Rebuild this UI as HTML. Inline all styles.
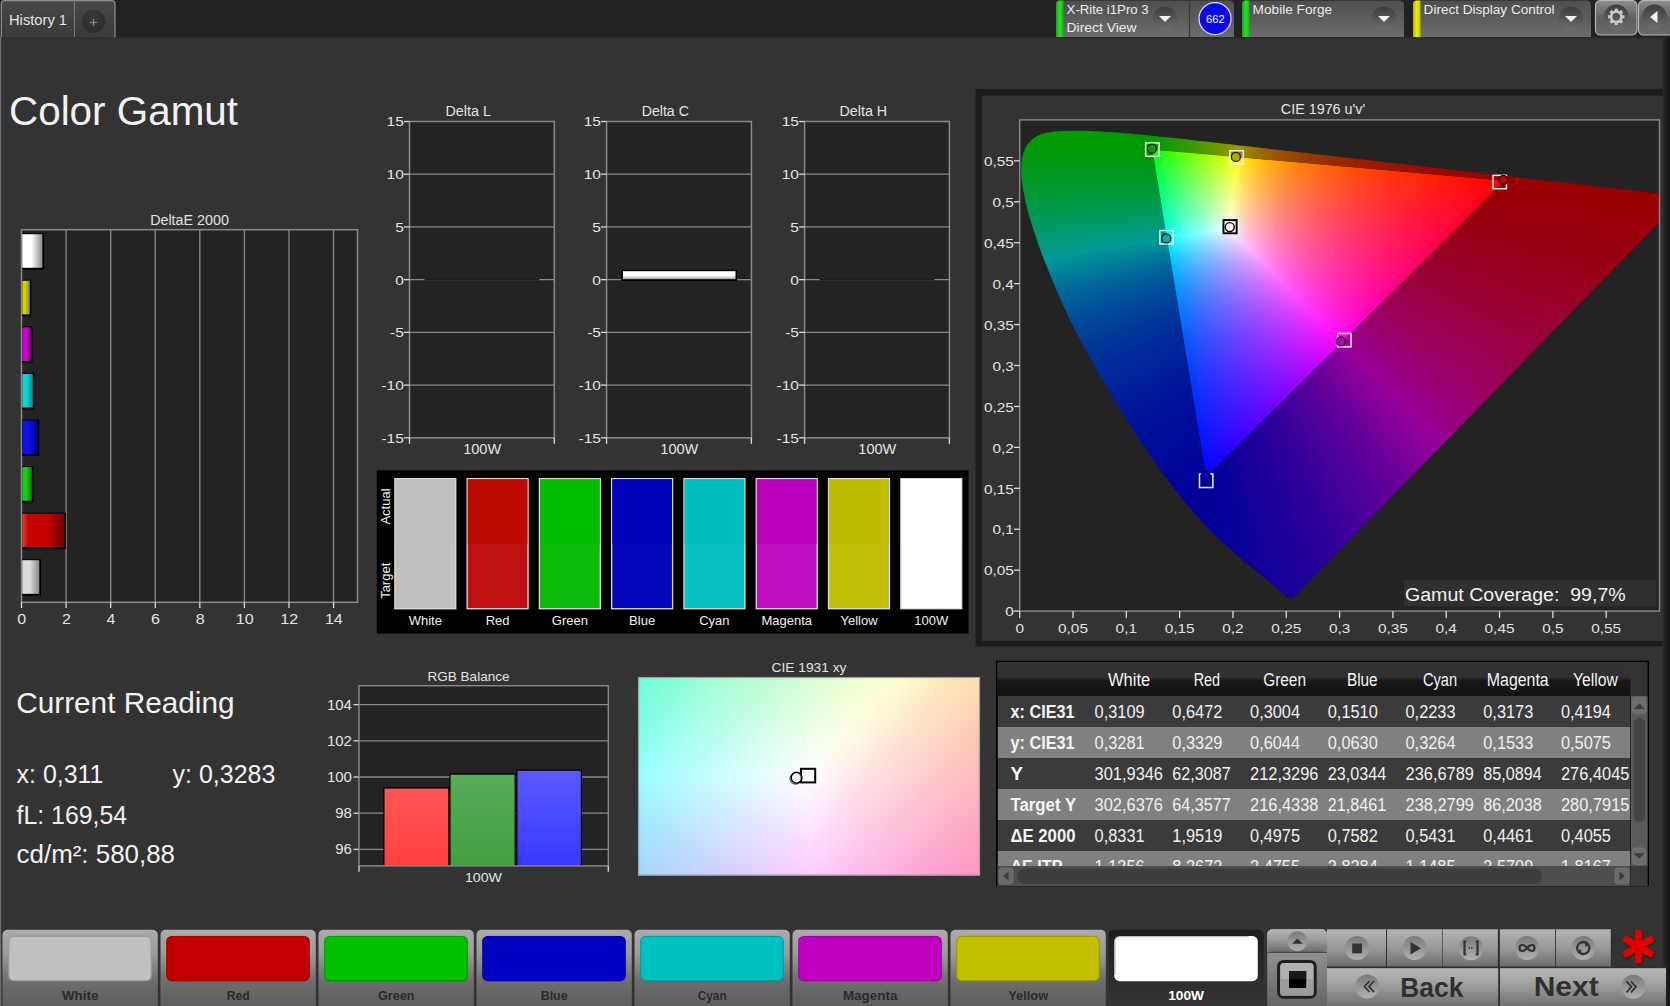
<!DOCTYPE html>
<html><head><meta charset="utf-8"><title>Color Gamut</title>
<style>
html,body{margin:0;padding:0;background:#333;overflow:hidden;position:relative;width:1670px;height:1006px}
.cie{position:absolute;left:0;top:0;width:1670px;height:1006px;isolation:isolate}.cie .cp{position:absolute;left:0;top:0;width:1670px;height:1006px}.cie .cl{position:absolute;left:0;top:0;width:1670px;height:1006px;mix-blend-mode:screen}
svg{display:block;font-family:"Liberation Sans",sans-serif;}
</style></head><body>
<svg width="1670" height="1006" viewBox="0 0 1670 1006">
<defs>
<linearGradient id="redge" x1="0" x2="1" y1="0" y2="0"><stop offset="0" stop-color="#2e2e2e"/><stop offset="1" stop-color="#121212"/></linearGradient>
<linearGradient id="tabg" x1="0" x2="0" y1="0" y2="1"><stop offset="0" stop-color="#484848"/><stop offset="1" stop-color="#3a3a3a"/></linearGradient>
<radialGradient id="plusg" cx="0.5" cy="0.35" r="0.6"><stop offset="0" stop-color="#3a3a3a"/><stop offset="1" stop-color="#2c2c2c"/></radialGradient>
<linearGradient id="devg" x1="0" x2="0" y1="0" y2="1"><stop offset="0" stop-color="#4e4e4e"/><stop offset="1" stop-color="#6c6c6c"/></linearGradient>
<linearGradient id="ddg" x1="0" x2="0" y1="0" y2="1"><stop offset="0" stop-color="#3c3c3c"/><stop offset="1" stop-color="#6e6e6e"/></linearGradient>
<linearGradient id="greenbar" x1="0" x2="1" y1="0" y2="0"><stop offset="0" stop-color="#1ca01c"/><stop offset="0.5" stop-color="#22e622"/><stop offset="1" stop-color="#18b018"/></linearGradient>
<linearGradient id="yelbar" x1="0" x2="1" y1="0" y2="0"><stop offset="0" stop-color="#b0b000"/><stop offset="0.5" stop-color="#f0f000"/><stop offset="1" stop-color="#c0c000"/></linearGradient>
<linearGradient id="btng" x1="0" x2="0" y1="0" y2="1"><stop offset="0" stop-color="#8e8e8e"/><stop offset="0.55" stop-color="#5e5e5e"/><stop offset="1" stop-color="#6a6a6a"/></linearGradient>
<linearGradient id="deb0" x1="0" x2="1"><stop offset="0" stop-color="#ffffff"/><stop offset="0.45" stop-color="#ffffff"/><stop offset="1" stop-color="#8c8c8c"/></linearGradient>
<linearGradient id="deb1" x1="0" x2="1"><stop offset="0" stop-color="#d0d000"/><stop offset="0.45" stop-color="#d0d000"/><stop offset="1" stop-color="#8a8a00"/></linearGradient>
<linearGradient id="deb2" x1="0" x2="1"><stop offset="0" stop-color="#d000d0"/><stop offset="0.45" stop-color="#d000d0"/><stop offset="1" stop-color="#800080"/></linearGradient>
<linearGradient id="deb3" x1="0" x2="1"><stop offset="0" stop-color="#10d0d0"/><stop offset="0.45" stop-color="#10d0d0"/><stop offset="1" stop-color="#008888"/></linearGradient>
<linearGradient id="deb4" x1="0" x2="1"><stop offset="0" stop-color="#1010e0"/><stop offset="0.45" stop-color="#1010e0"/><stop offset="1" stop-color="#000080"/></linearGradient>
<linearGradient id="deb5" x1="0" x2="1"><stop offset="0" stop-color="#10d010"/><stop offset="0.45" stop-color="#10d010"/><stop offset="1" stop-color="#008000"/></linearGradient>
<linearGradient id="deb6" x1="0" x2="1"><stop offset="0" stop-color="#e04040"/><stop offset="0.15" stop-color="#c80000"/><stop offset="0.6" stop-color="#c00000"/><stop offset="1" stop-color="#700000"/></linearGradient>
<linearGradient id="deb7" x1="0" x2="1"><stop offset="0" stop-color="#dcdcdc"/><stop offset="0.45" stop-color="#dcdcdc"/><stop offset="1" stop-color="#888888"/></linearGradient>
<linearGradient id="dcb" x1="0" x2="0" y1="0" y2="1"><stop offset="0" stop-color="#ffffff"/><stop offset="0.55" stop-color="#ffffff"/><stop offset="1" stop-color="#a0a0a0"/></linearGradient>
<linearGradient id="rbr" x1="0" x2="0" y1="0" y2="1"><stop offset="0" stop-color="#ff5656"/><stop offset="1" stop-color="#ff4040"/></linearGradient>
<linearGradient id="rbg" x1="0" x2="0" y1="0" y2="1"><stop offset="0" stop-color="#58ac58"/><stop offset="1" stop-color="#40a040"/></linearGradient>
<linearGradient id="rbb" x1="0" x2="0" y1="0" y2="1"><stop offset="0" stop-color="#5a5aff"/><stop offset="1" stop-color="#3838ff"/></linearGradient>
<style>#c9 rect{width:10.5px;height:10.5px}</style>
<filter id="c9blur" x="-5%" y="-5%" width="110%" height="110%" color-interpolation-filters="sRGB"><feGaussianBlur stdDeviation="6.0"/></filter>
<clipPath id="c9clip"><rect x="638" y="677" width="342" height="198.6"/></clipPath>
<linearGradient id="thg" x1="0" x2="0" y1="0" y2="1"><stop offset="0" stop-color="#343434"/><stop offset="0.45" stop-color="#303030"/><stop offset="0.55" stop-color="#171717"/><stop offset="1" stop-color="#131313"/></linearGradient>
<linearGradient id="bbg" x1="0" x2="0" y1="0" y2="1"><stop offset="0" stop-color="#ababab"/><stop offset="0.3" stop-color="#9a9a9a"/><stop offset="0.62" stop-color="#6e6e6e"/><stop offset="1" stop-color="#5a5a5a"/></linearGradient>
<linearGradient id="bbsel" x1="0" x2="0" y1="0" y2="1"><stop offset="0" stop-color="#1c1c1c"/><stop offset="0.5" stop-color="#2a2a2a"/><stop offset="1" stop-color="#363636"/></linearGradient>
<linearGradient id="cbg" x1="0" x2="0" y1="0" y2="1"><stop offset="0" stop-color="#b4b4b4"/><stop offset="0.5" stop-color="#999"/><stop offset="1" stop-color="#6c6c6c"/></linearGradient>
<linearGradient id="cbg2" x1="0" x2="0" y1="0" y2="1"><stop offset="0" stop-color="#b8b8b8"/><stop offset="0.4" stop-color="#a0a0a0"/><stop offset="1" stop-color="#6a6a6a"/></linearGradient>
<linearGradient id="icg" x1="0" x2="0" y1="0" y2="1"><stop offset="0" stop-color="#7a7a7a"/><stop offset="1" stop-color="#b0b0b0"/></linearGradient>
<linearGradient id="lbg" x1="0" x2="0" y1="0" y2="1"><stop offset="0" stop-color="#a8a8a8"/><stop offset="0.3" stop-color="#8e8e8e"/><stop offset="1" stop-color="#5e5e5e"/></linearGradient>
<filter id="astsh" x="-30%" y="-30%" width="160%" height="160%"><feDropShadow dx="0.8" dy="1" stdDeviation="0.8" flood-color="#000" flood-opacity="0.5"/></filter>
</defs>
<rect x="0" y="0" width="1670" height="1006" fill="#333333" />
<rect x="0" y="0" width="1670" height="37" fill="#222222" />
<rect x="0" y="37" width="1670" height="1.5" fill="#2a2a2a" />
<rect x="0" y="37" width="1.2" height="969" fill="#6e6e6e" />
<rect x="1662" y="37" width="8" height="969" fill="url(#redge)" />
<path d="M1.3,37.5 V4 Q1.3,0.7 4.5,0.7 H111.5 Q115,0.7 115,4 V37.5" fill="url(#tabg)" stroke="#8f8f8f" stroke-width="1.2"/>
<line x1="74.5" y1="2" x2="74.5" y2="37" stroke="#7a7a7a" stroke-width="1" />
<text x="9" y="25" font-size="14" fill="#e4e4e4" textLength="58" lengthAdjust="spacingAndGlyphs">History 1</text>
<circle cx="93.5" cy="21.5" r="11.5" fill="url(#plusg)"/>
<path d="M90,22.5 H97 M93.5,19 V26" stroke="#8a8a8a" stroke-width="1.2"/>
<path d="M1056,37 V4 Q1056,0.5 1060,0.5 H1229 Q1234,0.5 1234,5 V37 Z" fill="url(#devg)"/>
<path d="M1056,37 V4 Q1056,0.5 1060,0.5 H1063.5 V37 Z" fill="url(#greenbar)"/>
<text x="1066.6" y="13.8" font-size="12" fill="#ececec" textLength="82" lengthAdjust="spacingAndGlyphs">X-Rite i1Pro 3</text>
<text x="1066.6" y="32.3" font-size="12" fill="#ececec" textLength="70" lengthAdjust="spacingAndGlyphs">Direct View</text>
<circle cx="1165" cy="18.5" r="12" fill="url(#ddg)"/>
<path d="M1159,16 H1171 L1165,22 Z" fill="#f4f4f4"/>
<line x1="1189.5" y1="2" x2="1189.5" y2="37" stroke="#3a3a3a" stroke-width="1.2" />
<circle cx="1215" cy="18.6" r="16" fill="#0a0ae6" stroke="#d8d8ff" stroke-width="1.3"/>
<text x="1215.3" y="22.8" font-size="11" fill="#ffffff" text-anchor="middle" textLength="18.6" lengthAdjust="spacingAndGlyphs">662</text>
<path d="M1242,37 V4 Q1242,0.5 1246,0.5 H1399 Q1404,0.5 1404,5 V37 Z" fill="url(#devg)"/>
<path d="M1242,37 V4 Q1242,0.5 1246,0.5 H1249.5 V37 Z" fill="url(#greenbar)"/>
<text x="1252.6" y="13.8" font-size="12" fill="#ececec" textLength="79.6" lengthAdjust="spacingAndGlyphs">Mobile Forge</text>
<circle cx="1384" cy="18.5" r="12" fill="url(#ddg)"/>
<path d="M1378,16 H1390 L1384,22 Z" fill="#f4f4f4"/>
<path d="M1413,37 V4 Q1413,0.5 1417,0.5 H1586 Q1591,0.5 1591,5 V37 Z" fill="url(#devg)"/>
<path d="M1413,37 V4 Q1413,0.5 1417,0.5 H1420.5 V37 Z" fill="url(#yelbar)"/>
<text x="1423.6" y="13.7" font-size="12" fill="#ececec" textLength="131" lengthAdjust="spacingAndGlyphs">Direct Display Control</text>
<circle cx="1571" cy="18.5" r="12" fill="url(#ddg)"/>
<path d="M1565,16 H1577 L1571,22 Z" fill="#f4f4f4"/>
<rect x="1595.5" y="0.5" width="41.5" height="34.5" rx="5" fill="url(#btng)" stroke="#b8b8b8" stroke-width="1.1"/>
<rect x="1638.5" y="0.5" width="40" height="34.5" rx="5" fill="url(#btng)" stroke="#b8b8b8" stroke-width="1.1"/>
<circle cx="1616.3" cy="17" r="12.5" fill="url(#ddg)"/>
<circle cx="1654.5" cy="17" r="12.5" fill="url(#ddg)"/>
<rect x="1614.7" y="8.6" width="3.2" height="4" fill="#c8c8c8" transform="rotate(0 1616.3 16.8)"/><rect x="1614.7" y="8.6" width="3.2" height="4" fill="#c8c8c8" transform="rotate(45 1616.3 16.8)"/><rect x="1614.7" y="8.6" width="3.2" height="4" fill="#c8c8c8" transform="rotate(90 1616.3 16.8)"/><rect x="1614.7" y="8.6" width="3.2" height="4" fill="#c8c8c8" transform="rotate(135 1616.3 16.8)"/><rect x="1614.7" y="8.6" width="3.2" height="4" fill="#c8c8c8" transform="rotate(180 1616.3 16.8)"/><rect x="1614.7" y="8.6" width="3.2" height="4" fill="#c8c8c8" transform="rotate(225 1616.3 16.8)"/><rect x="1614.7" y="8.6" width="3.2" height="4" fill="#c8c8c8" transform="rotate(270 1616.3 16.8)"/><rect x="1614.7" y="8.6" width="3.2" height="4" fill="#c8c8c8" transform="rotate(315 1616.3 16.8)"/>
<circle cx="1616.3" cy="16.8" r="5.2" fill="none" stroke="#c8c8c8" stroke-width="2.6"/>
<path d="M1650,17 L1657.5,11 V23 Z" fill="#f0f0f0"/>
<text x="9" y="125" font-size="40" fill="#f2f2f2" textLength="229" lengthAdjust="spacingAndGlyphs">Color Gamut</text>
<text x="189.5" y="225.1" font-size="14" fill="#e4e4e4" text-anchor="middle" textLength="78.7" lengthAdjust="spacingAndGlyphs">DeltaE 2000</text>
<rect x="21.5" y="229.7" width="336" height="372.6" fill="#232323" />
<line x1="66.08" y1="229.7" x2="66.08" y2="602.3" stroke="#8a8a8a" stroke-width="1.3" />
<line x1="110.66" y1="229.7" x2="110.66" y2="602.3" stroke="#8a8a8a" stroke-width="1.3" />
<line x1="155.24" y1="229.7" x2="155.24" y2="602.3" stroke="#8a8a8a" stroke-width="1.3" />
<line x1="199.82" y1="229.7" x2="199.82" y2="602.3" stroke="#8a8a8a" stroke-width="1.3" />
<line x1="244.4" y1="229.7" x2="244.4" y2="602.3" stroke="#8a8a8a" stroke-width="1.3" />
<line x1="288.98" y1="229.7" x2="288.98" y2="602.3" stroke="#8a8a8a" stroke-width="1.3" />
<line x1="333.56" y1="229.7" x2="333.56" y2="602.3" stroke="#8a8a8a" stroke-width="1.3" />
<rect x="21.5" y="229.7" width="336" height="372.6" fill="none" stroke="#8a8a8a" stroke-width="1.5"/>
<line x1="21.5" y1="602.3" x2="21.5" y2="608" stroke="#dcdcdc" stroke-width="1.3" />
<text x="21.8" y="624.3" font-size="14" fill="#e4e4e4" text-anchor="middle" textLength="8.95" lengthAdjust="spacingAndGlyphs">0</text>
<line x1="66.08" y1="602.3" x2="66.08" y2="608" stroke="#dcdcdc" stroke-width="1.3" />
<text x="66.38" y="624.3" font-size="14" fill="#e4e4e4" text-anchor="middle" textLength="8.95" lengthAdjust="spacingAndGlyphs">2</text>
<line x1="110.66" y1="602.3" x2="110.66" y2="608" stroke="#dcdcdc" stroke-width="1.3" />
<text x="110.96" y="624.3" font-size="14" fill="#e4e4e4" text-anchor="middle" textLength="8.95" lengthAdjust="spacingAndGlyphs">4</text>
<line x1="155.24" y1="602.3" x2="155.24" y2="608" stroke="#dcdcdc" stroke-width="1.3" />
<text x="155.54" y="624.3" font-size="14" fill="#e4e4e4" text-anchor="middle" textLength="8.95" lengthAdjust="spacingAndGlyphs">6</text>
<line x1="199.82" y1="602.3" x2="199.82" y2="608" stroke="#dcdcdc" stroke-width="1.3" />
<text x="200.12" y="624.3" font-size="14" fill="#e4e4e4" text-anchor="middle" textLength="8.95" lengthAdjust="spacingAndGlyphs">8</text>
<line x1="244.4" y1="602.3" x2="244.4" y2="608" stroke="#dcdcdc" stroke-width="1.3" />
<text x="244.7" y="624.3" font-size="14" fill="#e4e4e4" text-anchor="middle" textLength="17.91" lengthAdjust="spacingAndGlyphs">10</text>
<line x1="288.98" y1="602.3" x2="288.98" y2="608" stroke="#dcdcdc" stroke-width="1.3" />
<text x="289.28" y="624.3" font-size="14" fill="#e4e4e4" text-anchor="middle" textLength="17.91" lengthAdjust="spacingAndGlyphs">12</text>
<line x1="333.56" y1="602.3" x2="333.56" y2="608" stroke="#dcdcdc" stroke-width="1.3" />
<text x="333.86" y="624.3" font-size="14" fill="#e4e4e4" text-anchor="middle" textLength="17.91" lengthAdjust="spacingAndGlyphs">14</text>
<rect x="22.25" y="233.19" width="21.82" height="36.6" fill="#000000" />
<rect x="22.25" y="234.19" width="20.12" height="33.6" fill="url(#deb0)" />
<rect x="22.25" y="279.76" width="9.24" height="36.6" fill="#000000" />
<rect x="22.25" y="280.76" width="7.54" height="33.6" fill="url(#deb1)" />
<rect x="22.25" y="326.34" width="10.14" height="36.6" fill="#000000" />
<rect x="22.25" y="327.34" width="8.44" height="33.6" fill="url(#deb2)" />
<rect x="22.25" y="372.91" width="12.31" height="36.6" fill="#000000" />
<rect x="22.25" y="373.91" width="10.61" height="33.6" fill="url(#deb3)" />
<rect x="22.25" y="419.49" width="17.1" height="36.6" fill="#000000" />
<rect x="22.25" y="420.49" width="15.4" height="33.6" fill="url(#deb4)" />
<rect x="22.25" y="466.06" width="11.29" height="36.6" fill="#000000" />
<rect x="22.25" y="467.06" width="9.59" height="33.6" fill="url(#deb5)" />
<rect x="22.25" y="512.64" width="43.71" height="36.6" fill="#000000" />
<rect x="22.25" y="513.64" width="42.01" height="33.6" fill="url(#deb6)" />
<rect x="22.25" y="559.21" width="18.77" height="36.6" fill="#000000" />
<rect x="22.25" y="560.21" width="17.07" height="33.6" fill="url(#deb7)" />
<rect x="409.5" y="121.5" width="144.8" height="316.3" fill="#232323" />
<text x="468.2" y="116.3" font-size="14" fill="#e4e4e4" text-anchor="middle" textLength="45.3" lengthAdjust="spacingAndGlyphs">Delta L</text>
<line x1="409.5" y1="174.22" x2="554.3" y2="174.22" stroke="#8a8a8a" stroke-width="1.3" />
<line x1="409.5" y1="226.93" x2="554.3" y2="226.93" stroke="#8a8a8a" stroke-width="1.3" />
<line x1="409.5" y1="279.65" x2="554.3" y2="279.65" stroke="#8a8a8a" stroke-width="1.3" />
<line x1="409.5" y1="332.37" x2="554.3" y2="332.37" stroke="#8a8a8a" stroke-width="1.3" />
<line x1="409.5" y1="385.08" x2="554.3" y2="385.08" stroke="#8a8a8a" stroke-width="1.3" />
<rect x="409.5" y="121.5" width="144.8" height="316.3" fill="none" stroke="#8a8a8a" stroke-width="1.5"/>
<line x1="404" y1="121.5" x2="409.5" y2="121.5" stroke="#dcdcdc" stroke-width="1.3" />
<text x="403.9" y="126.4" font-size="13.5" fill="#e4e4e4" text-anchor="end" textLength="17.27" lengthAdjust="spacingAndGlyphs">15</text>
<line x1="404" y1="174.22" x2="409.5" y2="174.22" stroke="#dcdcdc" stroke-width="1.3" />
<text x="403.9" y="179.12" font-size="13.5" fill="#e4e4e4" text-anchor="end" textLength="17.27" lengthAdjust="spacingAndGlyphs">10</text>
<line x1="404" y1="226.93" x2="409.5" y2="226.93" stroke="#dcdcdc" stroke-width="1.3" />
<text x="403.9" y="231.83" font-size="13.5" fill="#e4e4e4" text-anchor="end" textLength="8.63" lengthAdjust="spacingAndGlyphs">5</text>
<line x1="404" y1="279.65" x2="409.5" y2="279.65" stroke="#dcdcdc" stroke-width="1.3" />
<text x="403.9" y="284.55" font-size="13.5" fill="#e4e4e4" text-anchor="end" textLength="8.63" lengthAdjust="spacingAndGlyphs">0</text>
<line x1="404" y1="332.37" x2="409.5" y2="332.37" stroke="#dcdcdc" stroke-width="1.3" />
<text x="403.9" y="337.27" font-size="13.5" fill="#e4e4e4" text-anchor="end" textLength="13.8" lengthAdjust="spacingAndGlyphs">-5</text>
<line x1="404" y1="385.08" x2="409.5" y2="385.08" stroke="#dcdcdc" stroke-width="1.3" />
<text x="403.9" y="389.98" font-size="13.5" fill="#e4e4e4" text-anchor="end" textLength="22.44" lengthAdjust="spacingAndGlyphs">-10</text>
<line x1="404" y1="437.8" x2="409.5" y2="437.8" stroke="#dcdcdc" stroke-width="1.3" />
<text x="403.9" y="442.7" font-size="13.5" fill="#e4e4e4" text-anchor="end" textLength="22.44" lengthAdjust="spacingAndGlyphs">-15</text>
<line x1="409.5" y1="437.8" x2="409.5" y2="443.8" stroke="#dcdcdc" stroke-width="1.3" />
<line x1="554.3" y1="437.8" x2="554.3" y2="443.8" stroke="#dcdcdc" stroke-width="1.3" />
<text x="482.2" y="453.5" font-size="14" fill="#e4e4e4" text-anchor="middle" textLength="38" lengthAdjust="spacingAndGlyphs">100W</text>
<rect x="424.5" y="278.45" width="114.8" height="2" fill="#1e1e1e" />
<rect x="606.6" y="121.5" width="144.8" height="316.3" fill="#232323" />
<text x="665.3" y="116.3" font-size="14" fill="#e4e4e4" text-anchor="middle" textLength="47.2" lengthAdjust="spacingAndGlyphs">Delta C</text>
<line x1="606.6" y1="174.22" x2="751.4" y2="174.22" stroke="#8a8a8a" stroke-width="1.3" />
<line x1="606.6" y1="226.93" x2="751.4" y2="226.93" stroke="#8a8a8a" stroke-width="1.3" />
<line x1="606.6" y1="279.65" x2="751.4" y2="279.65" stroke="#8a8a8a" stroke-width="1.3" />
<line x1="606.6" y1="332.37" x2="751.4" y2="332.37" stroke="#8a8a8a" stroke-width="1.3" />
<line x1="606.6" y1="385.08" x2="751.4" y2="385.08" stroke="#8a8a8a" stroke-width="1.3" />
<rect x="606.6" y="121.5" width="144.8" height="316.3" fill="none" stroke="#8a8a8a" stroke-width="1.5"/>
<line x1="601.1" y1="121.5" x2="606.6" y2="121.5" stroke="#dcdcdc" stroke-width="1.3" />
<text x="601" y="126.4" font-size="13.5" fill="#e4e4e4" text-anchor="end" textLength="17.27" lengthAdjust="spacingAndGlyphs">15</text>
<line x1="601.1" y1="174.22" x2="606.6" y2="174.22" stroke="#dcdcdc" stroke-width="1.3" />
<text x="601" y="179.12" font-size="13.5" fill="#e4e4e4" text-anchor="end" textLength="17.27" lengthAdjust="spacingAndGlyphs">10</text>
<line x1="601.1" y1="226.93" x2="606.6" y2="226.93" stroke="#dcdcdc" stroke-width="1.3" />
<text x="601" y="231.83" font-size="13.5" fill="#e4e4e4" text-anchor="end" textLength="8.63" lengthAdjust="spacingAndGlyphs">5</text>
<line x1="601.1" y1="279.65" x2="606.6" y2="279.65" stroke="#dcdcdc" stroke-width="1.3" />
<text x="601" y="284.55" font-size="13.5" fill="#e4e4e4" text-anchor="end" textLength="8.63" lengthAdjust="spacingAndGlyphs">0</text>
<line x1="601.1" y1="332.37" x2="606.6" y2="332.37" stroke="#dcdcdc" stroke-width="1.3" />
<text x="601" y="337.27" font-size="13.5" fill="#e4e4e4" text-anchor="end" textLength="13.8" lengthAdjust="spacingAndGlyphs">-5</text>
<line x1="601.1" y1="385.08" x2="606.6" y2="385.08" stroke="#dcdcdc" stroke-width="1.3" />
<text x="601" y="389.98" font-size="13.5" fill="#e4e4e4" text-anchor="end" textLength="22.44" lengthAdjust="spacingAndGlyphs">-10</text>
<line x1="601.1" y1="437.8" x2="606.6" y2="437.8" stroke="#dcdcdc" stroke-width="1.3" />
<text x="601" y="442.7" font-size="13.5" fill="#e4e4e4" text-anchor="end" textLength="22.44" lengthAdjust="spacingAndGlyphs">-15</text>
<line x1="606.6" y1="437.8" x2="606.6" y2="443.8" stroke="#dcdcdc" stroke-width="1.3" />
<line x1="751.4" y1="437.8" x2="751.4" y2="443.8" stroke="#dcdcdc" stroke-width="1.3" />
<text x="679.3" y="453.5" font-size="14" fill="#e4e4e4" text-anchor="middle" textLength="38" lengthAdjust="spacingAndGlyphs">100W</text>
<rect x="804.6" y="121.5" width="144.8" height="316.3" fill="#232323" />
<text x="863.3" y="116.3" font-size="14" fill="#e4e4e4" text-anchor="middle" textLength="47.6" lengthAdjust="spacingAndGlyphs">Delta H</text>
<line x1="804.6" y1="174.22" x2="949.4" y2="174.22" stroke="#8a8a8a" stroke-width="1.3" />
<line x1="804.6" y1="226.93" x2="949.4" y2="226.93" stroke="#8a8a8a" stroke-width="1.3" />
<line x1="804.6" y1="279.65" x2="949.4" y2="279.65" stroke="#8a8a8a" stroke-width="1.3" />
<line x1="804.6" y1="332.37" x2="949.4" y2="332.37" stroke="#8a8a8a" stroke-width="1.3" />
<line x1="804.6" y1="385.08" x2="949.4" y2="385.08" stroke="#8a8a8a" stroke-width="1.3" />
<rect x="804.6" y="121.5" width="144.8" height="316.3" fill="none" stroke="#8a8a8a" stroke-width="1.5"/>
<line x1="799.1" y1="121.5" x2="804.6" y2="121.5" stroke="#dcdcdc" stroke-width="1.3" />
<text x="799" y="126.4" font-size="13.5" fill="#e4e4e4" text-anchor="end" textLength="17.27" lengthAdjust="spacingAndGlyphs">15</text>
<line x1="799.1" y1="174.22" x2="804.6" y2="174.22" stroke="#dcdcdc" stroke-width="1.3" />
<text x="799" y="179.12" font-size="13.5" fill="#e4e4e4" text-anchor="end" textLength="17.27" lengthAdjust="spacingAndGlyphs">10</text>
<line x1="799.1" y1="226.93" x2="804.6" y2="226.93" stroke="#dcdcdc" stroke-width="1.3" />
<text x="799" y="231.83" font-size="13.5" fill="#e4e4e4" text-anchor="end" textLength="8.63" lengthAdjust="spacingAndGlyphs">5</text>
<line x1="799.1" y1="279.65" x2="804.6" y2="279.65" stroke="#dcdcdc" stroke-width="1.3" />
<text x="799" y="284.55" font-size="13.5" fill="#e4e4e4" text-anchor="end" textLength="8.63" lengthAdjust="spacingAndGlyphs">0</text>
<line x1="799.1" y1="332.37" x2="804.6" y2="332.37" stroke="#dcdcdc" stroke-width="1.3" />
<text x="799" y="337.27" font-size="13.5" fill="#e4e4e4" text-anchor="end" textLength="13.8" lengthAdjust="spacingAndGlyphs">-5</text>
<line x1="799.1" y1="385.08" x2="804.6" y2="385.08" stroke="#dcdcdc" stroke-width="1.3" />
<text x="799" y="389.98" font-size="13.5" fill="#e4e4e4" text-anchor="end" textLength="22.44" lengthAdjust="spacingAndGlyphs">-10</text>
<line x1="799.1" y1="437.8" x2="804.6" y2="437.8" stroke="#dcdcdc" stroke-width="1.3" />
<text x="799" y="442.7" font-size="13.5" fill="#e4e4e4" text-anchor="end" textLength="22.44" lengthAdjust="spacingAndGlyphs">-15</text>
<line x1="804.6" y1="437.8" x2="804.6" y2="443.8" stroke="#dcdcdc" stroke-width="1.3" />
<line x1="949.4" y1="437.8" x2="949.4" y2="443.8" stroke="#dcdcdc" stroke-width="1.3" />
<text x="877.3" y="453.5" font-size="14" fill="#e4e4e4" text-anchor="middle" textLength="38" lengthAdjust="spacingAndGlyphs">100W</text>
<rect x="819.6" y="278.45" width="114.8" height="2" fill="#1e1e1e" />
<rect x="621" y="269.8" width="116" height="11.2" fill="#000" />
<rect x="623" y="271.2" width="112.5" height="8" fill="url(#dcb)" />
<rect x="376.8" y="470.4" width="591.7" height="163.1" fill="#000000" />
<rect x="394.2" y="478" width="62.2" height="131.4" fill="#dcdcdc" />
<rect x="395.5" y="479.3" width="59.6" height="128.8" fill="#c0c0c0" />
<rect x="395.5" y="479.3" width="59.6" height="65" fill="#c0c0c0" />
<text x="425.3" y="624.6" font-size="13" fill="#f0f0f0" text-anchor="middle">White</text>
<rect x="466.48" y="478" width="62.2" height="131.4" fill="#dcdcdc" />
<rect x="467.78" y="479.3" width="59.6" height="128.8" fill="#be1010" />
<rect x="467.78" y="479.3" width="59.6" height="65" fill="#bb0b00" />
<text x="497.58" y="624.6" font-size="13" fill="#f0f0f0" text-anchor="middle">Red</text>
<rect x="538.76" y="478" width="62.2" height="131.4" fill="#dcdcdc" />
<rect x="540.06" y="479.3" width="59.6" height="128.8" fill="#0cbe0c" />
<rect x="540.06" y="479.3" width="59.6" height="65" fill="#00bb00" />
<text x="569.86" y="624.6" font-size="13" fill="#f0f0f0" text-anchor="middle">Green</text>
<rect x="611.04" y="478" width="62.2" height="131.4" fill="#dcdcdc" />
<rect x="612.34" y="479.3" width="59.6" height="128.8" fill="#0606bd" />
<rect x="612.34" y="479.3" width="59.6" height="65" fill="#0000bb" />
<text x="642.14" y="624.6" font-size="13" fill="#f0f0f0" text-anchor="middle">Blue</text>
<rect x="683.32" y="478" width="62.2" height="131.4" fill="#dcdcdc" />
<rect x="684.62" y="479.3" width="59.6" height="128.8" fill="#0abfc0" />
<rect x="684.62" y="479.3" width="59.6" height="65" fill="#00bebe" />
<text x="714.42" y="624.6" font-size="13" fill="#f0f0f0" text-anchor="middle">Cyan</text>
<rect x="755.6" y="478" width="62.2" height="131.4" fill="#dcdcdc" />
<rect x="756.9" y="479.3" width="59.6" height="128.8" fill="#bd0cbd" />
<rect x="756.9" y="479.3" width="59.6" height="65" fill="#bc00bc" />
<text x="786.7" y="624.6" font-size="13" fill="#f0f0f0" text-anchor="middle">Magenta</text>
<rect x="827.88" y="478" width="62.2" height="131.4" fill="#dcdcdc" />
<rect x="829.18" y="479.3" width="59.6" height="128.8" fill="#bfbf0a" />
<rect x="829.18" y="479.3" width="59.6" height="65" fill="#bebe00" />
<text x="858.98" y="624.6" font-size="13" fill="#f0f0f0" text-anchor="middle">Yellow</text>
<rect x="900.16" y="478" width="62.2" height="131.4" fill="#dcdcdc" />
<rect x="901.46" y="479.3" width="59.6" height="128.8" fill="#ffffff" />
<rect x="901.46" y="479.3" width="59.6" height="65" fill="#ffffff" />
<text x="931.26" y="624.6" font-size="13" fill="#f0f0f0" text-anchor="middle">100W</text>
<text x="0" y="0" font-size="13" fill="#f0f0f0" text-anchor="middle" transform="translate(390,506.5) rotate(-90)">Actual</text>
<text x="0" y="0" font-size="13" fill="#f0f0f0" text-anchor="middle" transform="translate(390,580.8) rotate(-90)">Target</text>
<rect x="975.5" y="89" width="687.5" height="557.5" fill="#1c1c1c" />
<rect x="982" y="95.6" width="681" height="545.4" fill="#333333" />
<text x="1323" y="114.2" font-size="14" fill="#e4e4e4" text-anchor="middle" textLength="84.3" lengthAdjust="spacingAndGlyphs">CIE 1976 u'v'</text>
<rect x="1019.7" y="119.9" width="639.8" height="491.2" fill="#232323" />
<text x="16.2" y="713" font-size="29.5" fill="#f2f2f2" textLength="218.4" lengthAdjust="spacingAndGlyphs">Current Reading</text>
<text x="16.6" y="782.9" font-size="25" fill="#f2f2f2" textLength="86.8" lengthAdjust="spacingAndGlyphs">x: 0,311</text>
<text x="172.6" y="782.9" font-size="25" fill="#f2f2f2" textLength="102.7" lengthAdjust="spacingAndGlyphs">y: 0,3283</text>
<text x="16.6" y="823.6" font-size="25" fill="#f2f2f2" textLength="110.4" lengthAdjust="spacingAndGlyphs">fL: 169,54</text>
<text x="16.6" y="863.4" font-size="25" fill="#f2f2f2" textLength="158.4" lengthAdjust="spacingAndGlyphs">cd/m²: 580,88</text>
<text x="468.5" y="680.9" font-size="13.5" fill="#e4e4e4" text-anchor="middle" textLength="82" lengthAdjust="spacingAndGlyphs">RGB Balance</text>
<rect x="359" y="685.7" width="249.3" height="180.2" fill="#232323" />
<line x1="359" y1="704.6" x2="608.3" y2="704.6" stroke="#8a8a8a" stroke-width="1.3" />
<line x1="353.5" y1="704.6" x2="359" y2="704.6" stroke="#dcdcdc" stroke-width="1.3" />
<text x="351.9" y="709.5" font-size="14" fill="#e4e4e4" text-anchor="end" textLength="24.99" lengthAdjust="spacingAndGlyphs">104</text>
<line x1="359" y1="740.8" x2="608.3" y2="740.8" stroke="#8a8a8a" stroke-width="1.3" />
<line x1="353.5" y1="740.8" x2="359" y2="740.8" stroke="#dcdcdc" stroke-width="1.3" />
<text x="351.9" y="745.7" font-size="14" fill="#e4e4e4" text-anchor="end" textLength="24.99" lengthAdjust="spacingAndGlyphs">102</text>
<line x1="359" y1="777" x2="608.3" y2="777" stroke="#8a8a8a" stroke-width="1.3" />
<line x1="353.5" y1="777" x2="359" y2="777" stroke="#dcdcdc" stroke-width="1.3" />
<text x="351.9" y="781.9" font-size="14" fill="#e4e4e4" text-anchor="end" textLength="24.99" lengthAdjust="spacingAndGlyphs">100</text>
<line x1="359" y1="813.2" x2="608.3" y2="813.2" stroke="#8a8a8a" stroke-width="1.3" />
<line x1="353.5" y1="813.2" x2="359" y2="813.2" stroke="#dcdcdc" stroke-width="1.3" />
<text x="351.9" y="818.1" font-size="14" fill="#e4e4e4" text-anchor="end" textLength="16.66" lengthAdjust="spacingAndGlyphs">98</text>
<line x1="359" y1="849.4" x2="608.3" y2="849.4" stroke="#8a8a8a" stroke-width="1.3" />
<line x1="353.5" y1="849.4" x2="359" y2="849.4" stroke="#dcdcdc" stroke-width="1.3" />
<text x="351.9" y="854.3" font-size="14" fill="#e4e4e4" text-anchor="end" textLength="16.66" lengthAdjust="spacingAndGlyphs">96</text>
<rect x="383.3" y="787.3" width="66.1" height="78.6" fill="#000000" />
<rect x="384.5" y="788.6" width="63.7" height="77.3" fill="url(#rbr)" />
<rect x="449.4" y="773.4" width="66.4" height="92.5" fill="#000000" />
<rect x="450.6" y="774.7" width="64" height="91.2" fill="url(#rbg)" />
<rect x="516.3" y="769.5" width="65.7" height="96.4" fill="#000000" />
<rect x="517.5" y="770.8" width="63.3" height="95.1" fill="url(#rbb)" />
<rect x="359" y="685.7" width="249.3" height="180.2" fill="none" stroke="#8a8a8a" stroke-width="1.4"/>
<line x1="359" y1="865.9" x2="359" y2="871.8" stroke="#dcdcdc" stroke-width="1.3" />
<line x1="608.3" y1="865.9" x2="608.3" y2="871.8" stroke="#dcdcdc" stroke-width="1.3" />
<text x="483.5" y="882.2" font-size="13.5" fill="#e4e4e4" text-anchor="middle" textLength="37" lengthAdjust="spacingAndGlyphs">100W</text>
<text x="809" y="672" font-size="13.5" fill="#e4e4e4" text-anchor="middle" textLength="75" lengthAdjust="spacingAndGlyphs">CIE 1931 xy</text>
<g clip-path="url(#c9clip)"><g id="c9" filter="url(#c9blur)"><rect x="628" y="667" fill="#60ffd5"/><rect x="638" y="667" fill="#6affd5"/><rect x="648" y="667" fill="#73ffd5"/><rect x="658" y="667" fill="#7cffd4"/><rect x="668" y="667" fill="#83ffd4"/><rect x="678" y="667" fill="#8bffd4"/><rect x="688" y="667" fill="#91ffd3"/><rect x="698" y="667" fill="#98ffd3"/><rect x="708" y="667" fill="#9effd3"/><rect x="718" y="667" fill="#a5ffd2"/><rect x="728" y="667" fill="#abffd2"/><rect x="738" y="667" fill="#b0ffd1"/><rect x="748" y="667" fill="#b6ffd1"/><rect x="758" y="667" fill="#bbffd1"/><rect x="768" y="667" fill="#c1ffd0"/><rect x="778" y="667" fill="#c6ffd0"/><rect x="788" y="667" fill="#cbffcf"/><rect x="798" y="667" fill="#d0ffcf"/><rect x="808" y="667" fill="#d5ffcf"/><rect x="818" y="667" fill="#daffce"/><rect x="828" y="667" fill="#dfffce"/><rect x="838" y="667" fill="#e4ffcd"/><rect x="848" y="667" fill="#e8ffcd"/><rect x="858" y="667" fill="#edffcc"/><rect x="868" y="667" fill="#f2ffcc"/><rect x="878" y="667" fill="#f6ffcb"/><rect x="888" y="667" fill="#fbffcb"/><rect x="898" y="667" fill="#ffffca"/><rect x="908" y="667" fill="#fffac6"/><rect x="918" y="667" fill="#fff6c2"/><rect x="928" y="667" fill="#fff2be"/><rect x="938" y="667" fill="#ffeeba"/><rect x="948" y="667" fill="#ffeab7"/><rect x="958" y="667" fill="#ffe6b3"/><rect x="968" y="667" fill="#ffe3b0"/><rect x="978" y="667" fill="#ffdfad"/><rect x="988" y="667" fill="#ffdca9"/><rect x="628" y="677" fill="#66ffd9"/><rect x="638" y="677" fill="#6fffd9"/><rect x="648" y="677" fill="#78ffd8"/><rect x="658" y="677" fill="#80ffd8"/><rect x="668" y="677" fill="#87ffd8"/><rect x="678" y="677" fill="#8fffd7"/><rect x="688" y="677" fill="#95ffd7"/><rect x="698" y="677" fill="#9cffd7"/><rect x="708" y="677" fill="#a2ffd6"/><rect x="718" y="677" fill="#a8ffd6"/><rect x="728" y="677" fill="#aeffd6"/><rect x="738" y="677" fill="#b4ffd5"/><rect x="748" y="677" fill="#baffd5"/><rect x="758" y="677" fill="#bfffd5"/><rect x="768" y="677" fill="#c5ffd4"/><rect x="778" y="677" fill="#caffd4"/><rect x="788" y="677" fill="#cfffd4"/><rect x="798" y="677" fill="#d4ffd3"/><rect x="808" y="677" fill="#d9ffd3"/><rect x="818" y="677" fill="#deffd2"/><rect x="828" y="677" fill="#e3ffd2"/><rect x="838" y="677" fill="#e8ffd2"/><rect x="848" y="677" fill="#ecffd1"/><rect x="858" y="677" fill="#f1ffd1"/><rect x="868" y="677" fill="#f6ffd0"/><rect x="878" y="677" fill="#faffd0"/><rect x="888" y="677" fill="#ffffcf"/><rect x="898" y="677" fill="#fffacb"/><rect x="908" y="677" fill="#fff6c7"/><rect x="918" y="677" fill="#fff2c3"/><rect x="928" y="677" fill="#ffeebf"/><rect x="938" y="677" fill="#ffeabc"/><rect x="948" y="677" fill="#ffe6b8"/><rect x="958" y="677" fill="#ffe3b5"/><rect x="968" y="677" fill="#ffdfb1"/><rect x="978" y="677" fill="#ffdcae"/><rect x="988" y="677" fill="#ffd8ab"/><rect x="628" y="687" fill="#6affdd"/><rect x="638" y="687" fill="#74ffdc"/><rect x="648" y="687" fill="#7cffdc"/><rect x="658" y="687" fill="#84ffdc"/><rect x="668" y="687" fill="#8bffdc"/><rect x="678" y="687" fill="#93ffdb"/><rect x="688" y="687" fill="#99ffdb"/><rect x="698" y="687" fill="#a0ffdb"/><rect x="708" y="687" fill="#a6ffda"/><rect x="718" y="687" fill="#acffda"/><rect x="728" y="687" fill="#b2ffda"/><rect x="738" y="687" fill="#b8ffd9"/><rect x="748" y="687" fill="#bdffd9"/><rect x="758" y="687" fill="#c3ffd9"/><rect x="768" y="687" fill="#c8ffd8"/><rect x="778" y="687" fill="#ceffd8"/><rect x="788" y="687" fill="#d3ffd8"/><rect x="798" y="687" fill="#d8ffd7"/><rect x="808" y="687" fill="#ddffd7"/><rect x="818" y="687" fill="#e2ffd7"/><rect x="828" y="687" fill="#e7ffd6"/><rect x="838" y="687" fill="#ecffd6"/><rect x="848" y="687" fill="#f0ffd6"/><rect x="858" y="687" fill="#f5ffd5"/><rect x="868" y="687" fill="#faffd5"/><rect x="878" y="687" fill="#ffffd4"/><rect x="888" y="687" fill="#fffbd0"/><rect x="898" y="687" fill="#fff6cc"/><rect x="908" y="687" fill="#fff2c8"/><rect x="918" y="687" fill="#ffeec4"/><rect x="928" y="687" fill="#ffeac1"/><rect x="938" y="687" fill="#ffe6bd"/><rect x="948" y="687" fill="#ffe3ba"/><rect x="958" y="687" fill="#ffdfb6"/><rect x="968" y="687" fill="#ffdcb3"/><rect x="978" y="687" fill="#ffd8b0"/><rect x="988" y="687" fill="#ffd5ad"/><rect x="628" y="697" fill="#6fffe0"/><rect x="638" y="697" fill="#78ffe0"/><rect x="648" y="697" fill="#80ffe0"/><rect x="658" y="697" fill="#88ffe0"/><rect x="668" y="697" fill="#90ffdf"/><rect x="678" y="697" fill="#97ffdf"/><rect x="688" y="697" fill="#9dffdf"/><rect x="698" y="697" fill="#a4ffdf"/><rect x="708" y="697" fill="#aaffde"/><rect x="718" y="697" fill="#b0ffde"/><rect x="728" y="697" fill="#b6ffde"/><rect x="738" y="697" fill="#bcffde"/><rect x="748" y="697" fill="#c1ffdd"/><rect x="758" y="697" fill="#c7ffdd"/><rect x="768" y="697" fill="#ccffdd"/><rect x="778" y="697" fill="#d2ffdc"/><rect x="788" y="697" fill="#d7ffdc"/><rect x="798" y="697" fill="#dcffdc"/><rect x="808" y="697" fill="#e1ffdb"/><rect x="818" y="697" fill="#e6ffdb"/><rect x="828" y="697" fill="#ebffdb"/><rect x="838" y="697" fill="#f0ffda"/><rect x="848" y="697" fill="#f5ffda"/><rect x="858" y="697" fill="#f9ffda"/><rect x="868" y="697" fill="#feffd9"/><rect x="878" y="697" fill="#fffbd6"/><rect x="888" y="697" fill="#fff7d1"/><rect x="898" y="697" fill="#fff2cd"/><rect x="908" y="697" fill="#ffeec9"/><rect x="918" y="697" fill="#ffeac6"/><rect x="928" y="697" fill="#ffe6c2"/><rect x="938" y="697" fill="#ffe3be"/><rect x="948" y="697" fill="#ffdfbb"/><rect x="958" y="697" fill="#ffdbb8"/><rect x="968" y="697" fill="#ffd8b4"/><rect x="978" y="697" fill="#ffd5b1"/><rect x="988" y="697" fill="#ffd1ae"/><rect x="628" y="707" fill="#74ffe4"/><rect x="638" y="707" fill="#7dffe4"/><rect x="648" y="707" fill="#85ffe4"/><rect x="658" y="707" fill="#8dffe4"/><rect x="668" y="707" fill="#94ffe3"/><rect x="678" y="707" fill="#9bffe3"/><rect x="688" y="707" fill="#a1ffe3"/><rect x="698" y="707" fill="#a8ffe3"/><rect x="708" y="707" fill="#aeffe3"/><rect x="718" y="707" fill="#b4ffe2"/><rect x="728" y="707" fill="#baffe2"/><rect x="738" y="707" fill="#c0ffe2"/><rect x="748" y="707" fill="#c5ffe2"/><rect x="758" y="707" fill="#cbffe1"/><rect x="768" y="707" fill="#d0ffe1"/><rect x="778" y="707" fill="#d6ffe1"/><rect x="788" y="707" fill="#dbffe1"/><rect x="798" y="707" fill="#e0ffe0"/><rect x="808" y="707" fill="#e5ffe0"/><rect x="818" y="707" fill="#eaffe0"/><rect x="828" y="707" fill="#efffdf"/><rect x="838" y="707" fill="#f4ffdf"/><rect x="848" y="707" fill="#f9ffdf"/><rect x="858" y="707" fill="#feffde"/><rect x="868" y="707" fill="#fffbdb"/><rect x="878" y="707" fill="#fff7d7"/><rect x="888" y="707" fill="#fff3d3"/><rect x="898" y="707" fill="#ffeecf"/><rect x="908" y="707" fill="#ffeacb"/><rect x="918" y="707" fill="#ffe6c7"/><rect x="928" y="707" fill="#ffe2c3"/><rect x="938" y="707" fill="#ffdfc0"/><rect x="948" y="707" fill="#ffdbbc"/><rect x="958" y="707" fill="#ffd8b9"/><rect x="968" y="707" fill="#ffd4b6"/><rect x="978" y="707" fill="#ffd1b3"/><rect x="988" y="707" fill="#ffceb0"/><rect x="628" y="717" fill="#79ffe8"/><rect x="638" y="717" fill="#81ffe8"/><rect x="648" y="717" fill="#89ffe8"/><rect x="658" y="717" fill="#91ffe8"/><rect x="668" y="717" fill="#98ffe8"/><rect x="678" y="717" fill="#9fffe7"/><rect x="688" y="717" fill="#a5ffe7"/><rect x="698" y="717" fill="#acffe7"/><rect x="708" y="717" fill="#b2ffe7"/><rect x="718" y="717" fill="#b8ffe7"/><rect x="728" y="717" fill="#beffe6"/><rect x="738" y="717" fill="#c4ffe6"/><rect x="748" y="717" fill="#c9ffe6"/><rect x="758" y="717" fill="#cfffe6"/><rect x="768" y="717" fill="#d4ffe5"/><rect x="778" y="717" fill="#daffe5"/><rect x="788" y="717" fill="#dfffe5"/><rect x="798" y="717" fill="#e4ffe5"/><rect x="808" y="717" fill="#e9ffe5"/><rect x="818" y="717" fill="#eeffe4"/><rect x="828" y="717" fill="#f3ffe4"/><rect x="838" y="717" fill="#f8ffe4"/><rect x="848" y="717" fill="#fdffe4"/><rect x="858" y="717" fill="#fffce0"/><rect x="868" y="717" fill="#fff7dc"/><rect x="878" y="717" fill="#fff3d8"/><rect x="888" y="717" fill="#ffeed4"/><rect x="898" y="717" fill="#ffead0"/><rect x="908" y="717" fill="#ffe6cc"/><rect x="918" y="717" fill="#ffe2c8"/><rect x="928" y="717" fill="#ffdfc4"/><rect x="938" y="717" fill="#ffdbc1"/><rect x="948" y="717" fill="#ffd7be"/><rect x="958" y="717" fill="#ffd4ba"/><rect x="968" y="717" fill="#ffd1b7"/><rect x="978" y="717" fill="#ffceb4"/><rect x="988" y="717" fill="#ffcab1"/><rect x="628" y="727" fill="#7dffec"/><rect x="638" y="727" fill="#86ffec"/><rect x="648" y="727" fill="#8effec"/><rect x="658" y="727" fill="#95ffec"/><rect x="668" y="727" fill="#9cffec"/><rect x="678" y="727" fill="#a3ffec"/><rect x="688" y="727" fill="#aaffeb"/><rect x="698" y="727" fill="#b0ffeb"/><rect x="708" y="727" fill="#b6ffeb"/><rect x="718" y="727" fill="#bcffeb"/><rect x="728" y="727" fill="#c2ffeb"/><rect x="738" y="727" fill="#c8ffeb"/><rect x="748" y="727" fill="#ceffea"/><rect x="758" y="727" fill="#d3ffea"/><rect x="768" y="727" fill="#d8ffea"/><rect x="778" y="727" fill="#deffea"/><rect x="788" y="727" fill="#e3ffea"/><rect x="798" y="727" fill="#e8ffe9"/><rect x="808" y="727" fill="#eeffe9"/><rect x="818" y="727" fill="#f3ffe9"/><rect x="828" y="727" fill="#f8ffe9"/><rect x="838" y="727" fill="#fdffe9"/><rect x="848" y="727" fill="#fffce6"/><rect x="858" y="727" fill="#fff8e1"/><rect x="868" y="727" fill="#fff3dd"/><rect x="878" y="727" fill="#ffefd9"/><rect x="888" y="727" fill="#ffead5"/><rect x="898" y="727" fill="#ffe6d1"/><rect x="908" y="727" fill="#ffe2cd"/><rect x="918" y="727" fill="#ffdec9"/><rect x="928" y="727" fill="#ffdbc6"/><rect x="938" y="727" fill="#ffd7c2"/><rect x="948" y="727" fill="#ffd4bf"/><rect x="958" y="727" fill="#ffd0bc"/><rect x="968" y="727" fill="#ffcdb8"/><rect x="978" y="727" fill="#ffcab5"/><rect x="988" y="727" fill="#ffc7b2"/><rect x="628" y="737" fill="#82fff0"/><rect x="638" y="737" fill="#8afff0"/><rect x="648" y="737" fill="#92fff0"/><rect x="658" y="737" fill="#99fff0"/><rect x="668" y="737" fill="#a0fff0"/><rect x="678" y="737" fill="#a7fff0"/><rect x="688" y="737" fill="#aefff0"/><rect x="698" y="737" fill="#b4fff0"/><rect x="708" y="737" fill="#baffef"/><rect x="718" y="737" fill="#c0ffef"/><rect x="728" y="737" fill="#c6ffef"/><rect x="738" y="737" fill="#ccffef"/><rect x="748" y="737" fill="#d2ffef"/><rect x="758" y="737" fill="#d7ffef"/><rect x="768" y="737" fill="#ddffef"/><rect x="778" y="737" fill="#e2ffee"/><rect x="788" y="737" fill="#e7ffee"/><rect x="798" y="737" fill="#edffee"/><rect x="808" y="737" fill="#f2ffee"/><rect x="818" y="737" fill="#f7ffee"/><rect x="828" y="737" fill="#fcffee"/><rect x="838" y="737" fill="#fffdeb"/><rect x="848" y="737" fill="#fff8e7"/><rect x="858" y="737" fill="#fff3e2"/><rect x="868" y="737" fill="#ffefde"/><rect x="878" y="737" fill="#ffeada"/><rect x="888" y="737" fill="#ffe6d6"/><rect x="898" y="737" fill="#ffe2d2"/><rect x="908" y="737" fill="#ffdece"/><rect x="918" y="737" fill="#ffdbca"/><rect x="928" y="737" fill="#ffd7c7"/><rect x="938" y="737" fill="#ffd3c3"/><rect x="948" y="737" fill="#ffd0c0"/><rect x="958" y="737" fill="#ffcdbd"/><rect x="968" y="737" fill="#ffcaba"/><rect x="978" y="737" fill="#ffc6b7"/><rect x="988" y="737" fill="#ffc3b4"/><rect x="628" y="747" fill="#87fff5"/><rect x="638" y="747" fill="#8ffff5"/><rect x="648" y="747" fill="#96fff4"/><rect x="658" y="747" fill="#9efff4"/><rect x="668" y="747" fill="#a5fff4"/><rect x="678" y="747" fill="#acfff4"/><rect x="688" y="747" fill="#b2fff4"/><rect x="698" y="747" fill="#b8fff4"/><rect x="708" y="747" fill="#bffff4"/><rect x="718" y="747" fill="#c5fff4"/><rect x="728" y="747" fill="#cbfff4"/><rect x="738" y="747" fill="#d0fff4"/><rect x="748" y="747" fill="#d6fff4"/><rect x="758" y="747" fill="#dcfff3"/><rect x="768" y="747" fill="#e1fff3"/><rect x="778" y="747" fill="#e7fff3"/><rect x="788" y="747" fill="#ecfff3"/><rect x="798" y="747" fill="#f1fff3"/><rect x="808" y="747" fill="#f7fff3"/><rect x="818" y="747" fill="#fcfff3"/><rect x="828" y="747" fill="#fffdf1"/><rect x="838" y="747" fill="#fff8ec"/><rect x="848" y="747" fill="#fff3e7"/><rect x="858" y="747" fill="#ffefe3"/><rect x="868" y="747" fill="#ffeadf"/><rect x="878" y="747" fill="#ffe6db"/><rect x="888" y="747" fill="#ffe2d7"/><rect x="898" y="747" fill="#ffded3"/><rect x="908" y="747" fill="#ffdacf"/><rect x="918" y="747" fill="#ffd7cb"/><rect x="928" y="747" fill="#ffd3c8"/><rect x="938" y="747" fill="#ffd0c4"/><rect x="948" y="747" fill="#ffccc1"/><rect x="958" y="747" fill="#ffc9be"/><rect x="968" y="747" fill="#ffc6bb"/><rect x="978" y="747" fill="#ffc3b8"/><rect x="988" y="747" fill="#ffc0b5"/><rect x="628" y="757" fill="#8bfff9"/><rect x="638" y="757" fill="#93fff9"/><rect x="648" y="757" fill="#9bfff9"/><rect x="658" y="757" fill="#a2fff9"/><rect x="668" y="757" fill="#a9fff9"/><rect x="678" y="757" fill="#b0fff9"/><rect x="688" y="757" fill="#b6fff9"/><rect x="698" y="757" fill="#bdfff9"/><rect x="708" y="757" fill="#c3fff9"/><rect x="718" y="757" fill="#c9fff8"/><rect x="728" y="757" fill="#cffff8"/><rect x="738" y="757" fill="#d5fff8"/><rect x="748" y="757" fill="#dafff8"/><rect x="758" y="757" fill="#e0fff8"/><rect x="768" y="757" fill="#e6fff8"/><rect x="778" y="757" fill="#ebfff8"/><rect x="788" y="757" fill="#f0fff8"/><rect x="798" y="757" fill="#f6fff8"/><rect x="808" y="757" fill="#fbfff8"/><rect x="818" y="757" fill="#fffef7"/><rect x="828" y="757" fill="#fff8f2"/><rect x="838" y="757" fill="#fff4ed"/><rect x="848" y="757" fill="#ffefe8"/><rect x="858" y="757" fill="#ffeae4"/><rect x="868" y="757" fill="#ffe6df"/><rect x="878" y="757" fill="#ffe2db"/><rect x="888" y="757" fill="#ffded7"/><rect x="898" y="757" fill="#ffdad4"/><rect x="908" y="757" fill="#ffd6d0"/><rect x="918" y="757" fill="#ffd3cc"/><rect x="928" y="757" fill="#ffcfc9"/><rect x="938" y="757" fill="#ffccc6"/><rect x="948" y="757" fill="#ffc9c2"/><rect x="958" y="757" fill="#ffc5bf"/><rect x="968" y="757" fill="#ffc2bc"/><rect x="978" y="757" fill="#ffbfb9"/><rect x="988" y="757" fill="#ffbcb6"/><rect x="628" y="767" fill="#90fffd"/><rect x="638" y="767" fill="#98fffd"/><rect x="648" y="767" fill="#9ffffd"/><rect x="658" y="767" fill="#a7fffd"/><rect x="668" y="767" fill="#aefffd"/><rect x="678" y="767" fill="#b4fffd"/><rect x="688" y="767" fill="#bbfffd"/><rect x="698" y="767" fill="#c1fffd"/><rect x="708" y="767" fill="#c7fffd"/><rect x="718" y="767" fill="#cdfffd"/><rect x="728" y="767" fill="#d3fffd"/><rect x="738" y="767" fill="#d9fffd"/><rect x="748" y="767" fill="#dffffd"/><rect x="758" y="767" fill="#e5fffd"/><rect x="768" y="767" fill="#eafffd"/><rect x="778" y="767" fill="#f0fffd"/><rect x="788" y="767" fill="#f5fffd"/><rect x="798" y="767" fill="#fbfffd"/><rect x="808" y="767" fill="#fffefc"/><rect x="818" y="767" fill="#fff9f7"/><rect x="828" y="767" fill="#fff4f2"/><rect x="838" y="767" fill="#ffefed"/><rect x="848" y="767" fill="#ffebe9"/><rect x="858" y="767" fill="#ffe6e4"/><rect x="868" y="767" fill="#ffe2e0"/><rect x="878" y="767" fill="#ffdedc"/><rect x="888" y="767" fill="#ffdad8"/><rect x="898" y="767" fill="#ffd6d5"/><rect x="908" y="767" fill="#ffd3d1"/><rect x="918" y="767" fill="#ffcfcd"/><rect x="928" y="767" fill="#ffccca"/><rect x="938" y="767" fill="#ffc8c7"/><rect x="948" y="767" fill="#ffc5c3"/><rect x="958" y="767" fill="#ffc2c0"/><rect x="968" y="767" fill="#ffbfbd"/><rect x="978" y="767" fill="#ffbcba"/><rect x="988" y="767" fill="#ffb9b7"/><rect x="628" y="777" fill="#93fcff"/><rect x="638" y="777" fill="#9bfcff"/><rect x="648" y="777" fill="#a2fcff"/><rect x="658" y="777" fill="#a9fcff"/><rect x="668" y="777" fill="#b0fcff"/><rect x="678" y="777" fill="#b7fcff"/><rect x="688" y="777" fill="#bdfcff"/><rect x="698" y="777" fill="#c3fcff"/><rect x="708" y="777" fill="#c9fcff"/><rect x="718" y="777" fill="#cffcff"/><rect x="728" y="777" fill="#d5fcff"/><rect x="738" y="777" fill="#dbfcff"/><rect x="748" y="777" fill="#e1fcff"/><rect x="758" y="777" fill="#e6fcff"/><rect x="768" y="777" fill="#ecfcff"/><rect x="778" y="777" fill="#f1fcff"/><rect x="788" y="777" fill="#f7fcff"/><rect x="798" y="777" fill="#fcfcff"/><rect x="808" y="777" fill="#fff9fd"/><rect x="818" y="777" fill="#fff4f8"/><rect x="828" y="777" fill="#ffeff3"/><rect x="838" y="777" fill="#ffebee"/><rect x="848" y="777" fill="#ffe6e9"/><rect x="858" y="777" fill="#ffe2e5"/><rect x="868" y="777" fill="#ffdee1"/><rect x="878" y="777" fill="#ffdadd"/><rect x="888" y="777" fill="#ffd6d9"/><rect x="898" y="777" fill="#ffd2d5"/><rect x="908" y="777" fill="#ffcfd2"/><rect x="918" y="777" fill="#ffcbce"/><rect x="928" y="777" fill="#ffc8cb"/><rect x="938" y="777" fill="#ffc4c8"/><rect x="948" y="777" fill="#ffc1c4"/><rect x="958" y="777" fill="#ffbec1"/><rect x="968" y="777" fill="#ffbbbe"/><rect x="978" y="777" fill="#ffb8bb"/><rect x="988" y="777" fill="#ffb5b8"/><rect x="628" y="787" fill="#95f8ff"/><rect x="638" y="787" fill="#9cf8ff"/><rect x="648" y="787" fill="#a4f8ff"/><rect x="658" y="787" fill="#aaf8ff"/><rect x="668" y="787" fill="#b1f8ff"/><rect x="678" y="787" fill="#b8f7ff"/><rect x="688" y="787" fill="#bef7ff"/><rect x="698" y="787" fill="#c4f7ff"/><rect x="708" y="787" fill="#caf7ff"/><rect x="718" y="787" fill="#d0f7ff"/><rect x="728" y="787" fill="#d6f7ff"/><rect x="738" y="787" fill="#dbf7ff"/><rect x="748" y="787" fill="#e1f7ff"/><rect x="758" y="787" fill="#e6f7ff"/><rect x="768" y="787" fill="#ecf7ff"/><rect x="778" y="787" fill="#f1f7ff"/><rect x="788" y="787" fill="#f7f7ff"/><rect x="798" y="787" fill="#fcf6ff"/><rect x="808" y="787" fill="#fff4fd"/><rect x="818" y="787" fill="#ffeff8"/><rect x="828" y="787" fill="#ffebf3"/><rect x="838" y="787" fill="#ffe6ef"/><rect x="848" y="787" fill="#ffe2ea"/><rect x="858" y="787" fill="#ffdee6"/><rect x="868" y="787" fill="#ffdae2"/><rect x="878" y="787" fill="#ffd6de"/><rect x="888" y="787" fill="#ffd2da"/><rect x="898" y="787" fill="#ffced6"/><rect x="908" y="787" fill="#ffcbd3"/><rect x="918" y="787" fill="#ffc7cf"/><rect x="928" y="787" fill="#ffc4cc"/><rect x="938" y="787" fill="#ffc1c9"/><rect x="948" y="787" fill="#ffbdc5"/><rect x="958" y="787" fill="#ffbac2"/><rect x="968" y="787" fill="#ffb7bf"/><rect x="978" y="787" fill="#ffb4bc"/><rect x="988" y="787" fill="#ffb2ba"/><rect x="628" y="797" fill="#97f3ff"/><rect x="638" y="797" fill="#9ef3ff"/><rect x="648" y="797" fill="#a5f3ff"/><rect x="658" y="797" fill="#acf3ff"/><rect x="668" y="797" fill="#b2f3ff"/><rect x="678" y="797" fill="#b9f3ff"/><rect x="688" y="797" fill="#bff3ff"/><rect x="698" y="797" fill="#c5f3ff"/><rect x="708" y="797" fill="#cbf3ff"/><rect x="718" y="797" fill="#d0f2ff"/><rect x="728" y="797" fill="#d6f2ff"/><rect x="738" y="797" fill="#dcf2ff"/><rect x="748" y="797" fill="#e1f2ff"/><rect x="758" y="797" fill="#e6f2ff"/><rect x="768" y="797" fill="#ecf2ff"/><rect x="778" y="797" fill="#f1f2ff"/><rect x="788" y="797" fill="#f6f1ff"/><rect x="798" y="797" fill="#fbf1ff"/><rect x="808" y="797" fill="#fff0fd"/><rect x="818" y="797" fill="#ffebf8"/><rect x="828" y="797" fill="#ffe6f4"/><rect x="838" y="797" fill="#ffe2ef"/><rect x="848" y="797" fill="#ffddeb"/><rect x="858" y="797" fill="#ffd9e7"/><rect x="868" y="797" fill="#ffd5e3"/><rect x="878" y="797" fill="#ffd1df"/><rect x="888" y="797" fill="#ffcedb"/><rect x="898" y="797" fill="#ffcad7"/><rect x="908" y="797" fill="#ffc7d4"/><rect x="918" y="797" fill="#ffc3d0"/><rect x="928" y="797" fill="#ffc0cd"/><rect x="938" y="797" fill="#ffbdca"/><rect x="948" y="797" fill="#ffbac7"/><rect x="958" y="797" fill="#ffb7c3"/><rect x="968" y="797" fill="#ffb4c0"/><rect x="978" y="797" fill="#ffb1be"/><rect x="988" y="797" fill="#ffaebb"/><rect x="628" y="807" fill="#99efff"/><rect x="638" y="807" fill="#a0efff"/><rect x="648" y="807" fill="#a6efff"/><rect x="658" y="807" fill="#adefff"/><rect x="668" y="807" fill="#b3eeff"/><rect x="678" y="807" fill="#b9eeff"/><rect x="688" y="807" fill="#c0eeff"/><rect x="698" y="807" fill="#c5eeff"/><rect x="708" y="807" fill="#cbeeff"/><rect x="718" y="807" fill="#d1eeff"/><rect x="728" y="807" fill="#d6edff"/><rect x="738" y="807" fill="#dcedff"/><rect x="748" y="807" fill="#e1edff"/><rect x="758" y="807" fill="#e7edff"/><rect x="768" y="807" fill="#ecedff"/><rect x="778" y="807" fill="#f1edff"/><rect x="788" y="807" fill="#f6ecff"/><rect x="798" y="807" fill="#fbecff"/><rect x="808" y="807" fill="#ffebfe"/><rect x="818" y="807" fill="#ffe6f9"/><rect x="828" y="807" fill="#ffe2f4"/><rect x="838" y="807" fill="#ffddf0"/><rect x="848" y="807" fill="#ffd9eb"/><rect x="858" y="807" fill="#ffd5e7"/><rect x="868" y="807" fill="#ffd1e3"/><rect x="878" y="807" fill="#ffcddf"/><rect x="888" y="807" fill="#ffcadc"/><rect x="898" y="807" fill="#ffc6d8"/><rect x="908" y="807" fill="#ffc3d5"/><rect x="918" y="807" fill="#ffbfd1"/><rect x="928" y="807" fill="#ffbcce"/><rect x="938" y="807" fill="#ffb9cb"/><rect x="948" y="807" fill="#ffb6c7"/><rect x="958" y="807" fill="#ffb3c4"/><rect x="968" y="807" fill="#ffb0c1"/><rect x="978" y="807" fill="#ffadbf"/><rect x="988" y="807" fill="#ffaabc"/><rect x="628" y="817" fill="#9aebff"/><rect x="638" y="817" fill="#a1ebff"/><rect x="648" y="817" fill="#a8eaff"/><rect x="658" y="817" fill="#aeeaff"/><rect x="668" y="817" fill="#b4eaff"/><rect x="678" y="817" fill="#baeaff"/><rect x="688" y="817" fill="#c0eaff"/><rect x="698" y="817" fill="#c6e9ff"/><rect x="708" y="817" fill="#cce9ff"/><rect x="718" y="817" fill="#d1e9ff"/><rect x="728" y="817" fill="#d7e9ff"/><rect x="738" y="817" fill="#dce9ff"/><rect x="748" y="817" fill="#e1e8ff"/><rect x="758" y="817" fill="#e7e8ff"/><rect x="768" y="817" fill="#ece8ff"/><rect x="778" y="817" fill="#f1e8ff"/><rect x="788" y="817" fill="#f6e7ff"/><rect x="798" y="817" fill="#fbe7ff"/><rect x="808" y="817" fill="#ffe6fe"/><rect x="818" y="817" fill="#ffe1f9"/><rect x="828" y="817" fill="#ffddf5"/><rect x="838" y="817" fill="#ffd9f0"/><rect x="848" y="817" fill="#ffd5ec"/><rect x="858" y="817" fill="#ffd1e8"/><rect x="868" y="817" fill="#ffcde4"/><rect x="878" y="817" fill="#ffc9e0"/><rect x="888" y="817" fill="#ffc5dc"/><rect x="898" y="817" fill="#ffc2d9"/><rect x="908" y="817" fill="#ffbfd5"/><rect x="918" y="817" fill="#ffbbd2"/><rect x="928" y="817" fill="#ffb8cf"/><rect x="938" y="817" fill="#ffb5cc"/><rect x="948" y="817" fill="#ffb2c8"/><rect x="958" y="817" fill="#ffafc5"/><rect x="968" y="817" fill="#ffacc3"/><rect x="978" y="817" fill="#ffa9c0"/><rect x="988" y="817" fill="#ffa6bd"/><rect x="628" y="827" fill="#9ce6ff"/><rect x="638" y="827" fill="#a2e6ff"/><rect x="648" y="827" fill="#a9e6ff"/><rect x="658" y="827" fill="#afe6ff"/><rect x="668" y="827" fill="#b5e6ff"/><rect x="678" y="827" fill="#bbe5ff"/><rect x="688" y="827" fill="#c1e5ff"/><rect x="698" y="827" fill="#c7e5ff"/><rect x="708" y="827" fill="#cce5ff"/><rect x="718" y="827" fill="#d2e4ff"/><rect x="728" y="827" fill="#d7e4ff"/><rect x="738" y="827" fill="#dce4ff"/><rect x="748" y="827" fill="#e1e4ff"/><rect x="758" y="827" fill="#e7e3ff"/><rect x="768" y="827" fill="#ece3ff"/><rect x="778" y="827" fill="#f1e3ff"/><rect x="788" y="827" fill="#f6e2ff"/><rect x="798" y="827" fill="#fbe2ff"/><rect x="808" y="827" fill="#ffe1fe"/><rect x="818" y="827" fill="#ffddfa"/><rect x="828" y="827" fill="#ffd8f5"/><rect x="838" y="827" fill="#ffd4f1"/><rect x="848" y="827" fill="#ffd0ed"/><rect x="858" y="827" fill="#ffcce9"/><rect x="868" y="827" fill="#ffc9e5"/><rect x="878" y="827" fill="#ffc5e1"/><rect x="888" y="827" fill="#ffc1dd"/><rect x="898" y="827" fill="#ffbeda"/><rect x="908" y="827" fill="#ffbbd6"/><rect x="918" y="827" fill="#ffb7d3"/><rect x="928" y="827" fill="#ffb4d0"/><rect x="938" y="827" fill="#ffb1cc"/><rect x="948" y="827" fill="#ffaec9"/><rect x="958" y="827" fill="#ffabc6"/><rect x="968" y="827" fill="#ffa8c3"/><rect x="978" y="827" fill="#ffa5c1"/><rect x="988" y="827" fill="#ffa3be"/><rect x="628" y="837" fill="#9de2ff"/><rect x="638" y="837" fill="#a4e2ff"/><rect x="648" y="837" fill="#aae2ff"/><rect x="658" y="837" fill="#b0e1ff"/><rect x="668" y="837" fill="#b6e1ff"/><rect x="678" y="837" fill="#bce1ff"/><rect x="688" y="837" fill="#c2e1ff"/><rect x="698" y="837" fill="#c7e0ff"/><rect x="708" y="837" fill="#cde0ff"/><rect x="718" y="837" fill="#d2e0ff"/><rect x="728" y="837" fill="#d7dfff"/><rect x="738" y="837" fill="#dddfff"/><rect x="748" y="837" fill="#e2dfff"/><rect x="758" y="837" fill="#e7deff"/><rect x="768" y="837" fill="#ecdeff"/><rect x="778" y="837" fill="#f1deff"/><rect x="788" y="837" fill="#f5ddff"/><rect x="798" y="837" fill="#faddff"/><rect x="808" y="837" fill="#ffddff"/><rect x="818" y="837" fill="#ffd8fa"/><rect x="828" y="837" fill="#ffd4f6"/><rect x="838" y="837" fill="#ffd0f1"/><rect x="848" y="837" fill="#ffcced"/><rect x="858" y="837" fill="#ffc8e9"/><rect x="868" y="837" fill="#ffc4e5"/><rect x="878" y="837" fill="#ffc1e2"/><rect x="888" y="837" fill="#ffbdde"/><rect x="898" y="837" fill="#ffbada"/><rect x="908" y="837" fill="#ffb6d7"/><rect x="918" y="837" fill="#ffb3d4"/><rect x="928" y="837" fill="#ffb0d0"/><rect x="938" y="837" fill="#ffadcd"/><rect x="948" y="837" fill="#ffaaca"/><rect x="958" y="837" fill="#ffa7c7"/><rect x="968" y="837" fill="#ffa4c4"/><rect x="978" y="837" fill="#ffa2c2"/><rect x="988" y="837" fill="#ff9fbf"/><rect x="628" y="847" fill="#9fdeff"/><rect x="638" y="847" fill="#a5deff"/><rect x="648" y="847" fill="#abddff"/><rect x="658" y="847" fill="#b1ddff"/><rect x="668" y="847" fill="#b7ddff"/><rect x="678" y="847" fill="#bddcff"/><rect x="688" y="847" fill="#c2dcff"/><rect x="698" y="847" fill="#c8dcff"/><rect x="708" y="847" fill="#cddbff"/><rect x="718" y="847" fill="#d2dbff"/><rect x="728" y="847" fill="#d8dbff"/><rect x="738" y="847" fill="#dddaff"/><rect x="748" y="847" fill="#e2daff"/><rect x="758" y="847" fill="#e7daff"/><rect x="768" y="847" fill="#ecd9ff"/><rect x="778" y="847" fill="#f1d9ff"/><rect x="788" y="847" fill="#f5d9ff"/><rect x="798" y="847" fill="#fad8ff"/><rect x="808" y="847" fill="#ffd8ff"/><rect x="818" y="847" fill="#ffd4fb"/><rect x="828" y="847" fill="#ffcff6"/><rect x="838" y="847" fill="#ffcbf2"/><rect x="848" y="847" fill="#ffc7ee"/><rect x="858" y="847" fill="#ffc4ea"/><rect x="868" y="847" fill="#ffc0e6"/><rect x="878" y="847" fill="#ffbce2"/><rect x="888" y="847" fill="#ffb9df"/><rect x="898" y="847" fill="#ffb6db"/><rect x="908" y="847" fill="#ffb2d8"/><rect x="918" y="847" fill="#ffafd4"/><rect x="928" y="847" fill="#ffacd1"/><rect x="938" y="847" fill="#ffa9ce"/><rect x="948" y="847" fill="#ffa6cb"/><rect x="958" y="847" fill="#ffa3c8"/><rect x="968" y="847" fill="#ffa0c5"/><rect x="978" y="847" fill="#ff9ec3"/><rect x="988" y="847" fill="#ff9bc0"/><rect x="628" y="857" fill="#a0daff"/><rect x="638" y="857" fill="#a6d9ff"/><rect x="648" y="857" fill="#acd9ff"/><rect x="658" y="857" fill="#b2d9ff"/><rect x="668" y="857" fill="#b8d8ff"/><rect x="678" y="857" fill="#bed8ff"/><rect x="688" y="857" fill="#c3d8ff"/><rect x="698" y="857" fill="#c8d7ff"/><rect x="708" y="857" fill="#ced7ff"/><rect x="718" y="857" fill="#d3d6ff"/><rect x="728" y="857" fill="#d8d6ff"/><rect x="738" y="857" fill="#ddd6ff"/><rect x="748" y="857" fill="#e2d5ff"/><rect x="758" y="857" fill="#e7d5ff"/><rect x="768" y="857" fill="#ecd4ff"/><rect x="778" y="857" fill="#f0d4ff"/><rect x="788" y="857" fill="#f5d4ff"/><rect x="798" y="857" fill="#fad3ff"/><rect x="808" y="857" fill="#fed3ff"/><rect x="818" y="857" fill="#ffcffb"/><rect x="828" y="857" fill="#ffcbf7"/><rect x="838" y="857" fill="#ffc7f2"/><rect x="848" y="857" fill="#ffc3ee"/><rect x="858" y="857" fill="#ffbfea"/><rect x="868" y="857" fill="#ffbce7"/><rect x="878" y="857" fill="#ffb8e3"/><rect x="888" y="857" fill="#ffb5df"/><rect x="898" y="857" fill="#ffb1dc"/><rect x="908" y="857" fill="#ffaed9"/><rect x="918" y="857" fill="#ffabd5"/><rect x="928" y="857" fill="#ffa8d2"/><rect x="938" y="857" fill="#ffa5cf"/><rect x="948" y="857" fill="#ffa2cc"/><rect x="958" y="857" fill="#ff9fc9"/><rect x="968" y="857" fill="#ff9dc6"/><rect x="978" y="857" fill="#ff9ac4"/><rect x="988" y="857" fill="#ff97c1"/><rect x="628" y="867" fill="#a2d5ff"/><rect x="638" y="867" fill="#a8d5ff"/><rect x="648" y="867" fill="#aed5ff"/><rect x="658" y="867" fill="#b3d4ff"/><rect x="668" y="867" fill="#b9d4ff"/><rect x="678" y="867" fill="#bed3ff"/><rect x="688" y="867" fill="#c4d3ff"/><rect x="698" y="867" fill="#c9d3ff"/><rect x="708" y="867" fill="#ced2ff"/><rect x="718" y="867" fill="#d3d2ff"/><rect x="728" y="867" fill="#d8d1ff"/><rect x="738" y="867" fill="#ddd1ff"/><rect x="748" y="867" fill="#e2d1ff"/><rect x="758" y="867" fill="#e7d0ff"/><rect x="768" y="867" fill="#ecd0ff"/><rect x="778" y="867" fill="#f0cfff"/><rect x="788" y="867" fill="#f5cfff"/><rect x="798" y="867" fill="#faceff"/><rect x="808" y="867" fill="#feceff"/><rect x="818" y="867" fill="#ffcafb"/><rect x="828" y="867" fill="#ffc6f7"/><rect x="838" y="867" fill="#ffc2f3"/><rect x="848" y="867" fill="#ffbeef"/><rect x="858" y="867" fill="#ffbbeb"/><rect x="868" y="867" fill="#ffb7e7"/><rect x="878" y="867" fill="#ffb4e3"/><rect x="888" y="867" fill="#ffb0e0"/><rect x="898" y="867" fill="#ffaddd"/><rect x="908" y="867" fill="#ffaad9"/><rect x="918" y="867" fill="#ffa7d6"/><rect x="928" y="867" fill="#ffa4d3"/><rect x="938" y="867" fill="#ffa1d0"/><rect x="948" y="867" fill="#ff9ecd"/><rect x="958" y="867" fill="#ff9bca"/><rect x="968" y="867" fill="#ff98c7"/><rect x="978" y="867" fill="#ff96c4"/><rect x="988" y="867" fill="#ff93c2"/><rect x="628" y="877" fill="#a3d1ff"/><rect x="638" y="877" fill="#a9d1ff"/><rect x="648" y="877" fill="#afd0ff"/><rect x="658" y="877" fill="#b4d0ff"/><rect x="668" y="877" fill="#bad0ff"/><rect x="678" y="877" fill="#bfcfff"/><rect x="688" y="877" fill="#c4cfff"/><rect x="698" y="877" fill="#caceff"/><rect x="708" y="877" fill="#cfceff"/><rect x="718" y="877" fill="#d4cdff"/><rect x="728" y="877" fill="#d9cdff"/><rect x="738" y="877" fill="#ddccff"/><rect x="748" y="877" fill="#e2ccff"/><rect x="758" y="877" fill="#e7cbff"/><rect x="768" y="877" fill="#eccbff"/><rect x="778" y="877" fill="#f0caff"/><rect x="788" y="877" fill="#f5caff"/><rect x="798" y="877" fill="#f9c9ff"/><rect x="808" y="877" fill="#fec9ff"/><rect x="818" y="877" fill="#ffc5fc"/><rect x="828" y="877" fill="#ffc2f7"/><rect x="838" y="877" fill="#ffbef3"/><rect x="848" y="877" fill="#ffbaef"/><rect x="858" y="877" fill="#ffb6eb"/><rect x="868" y="877" fill="#ffb3e8"/><rect x="878" y="877" fill="#ffafe4"/><rect x="888" y="877" fill="#fface1"/><rect x="898" y="877" fill="#ffa9dd"/><rect x="908" y="877" fill="#ffa6da"/><rect x="918" y="877" fill="#ffa3d7"/><rect x="928" y="877" fill="#ffa0d4"/><rect x="938" y="877" fill="#ff9dd1"/><rect x="948" y="877" fill="#ff9ace"/><rect x="958" y="877" fill="#ff97cb"/><rect x="968" y="877" fill="#ff94c8"/><rect x="978" y="877" fill="#ff92c5"/><rect x="988" y="877" fill="#ff8fc3"/></g></g>
<rect x="638.5" y="677.5" width="341" height="197.6" fill="none" stroke="#a0a0a0" stroke-width="1.2"/>
<rect x="801" y="768.8" width="14.2" height="13.6" fill="none" stroke="#fff" stroke-width="3.6"/>
<rect x="801" y="768.8" width="14.2" height="13.6" fill="#fff" fill-opacity="0.6" stroke="#000" stroke-width="2"/>
<circle cx="795.6" cy="778.6" r="5.6" fill="none" stroke="#555" stroke-width="1.2"/>
<circle cx="796.6" cy="777.7" r="5.4" fill="#fff" fill-opacity="0.5" stroke="#000" stroke-width="1.4"/>
<rect x="996" y="660.7" width="653" height="225.5" fill="#000000" />
<rect x="997.5" y="662" width="650" height="34" fill="#333333" />
<rect x="997.5" y="662" width="633" height="34" fill="url(#thg)" />
<text x="1129.1" y="686" font-size="18" fill="#f4f4f4" text-anchor="middle" textLength="42.2" lengthAdjust="spacingAndGlyphs">White</text>
<text x="1206.83" y="686" font-size="18" fill="#f4f4f4" text-anchor="middle" textLength="26.4" lengthAdjust="spacingAndGlyphs">Red</text>
<text x="1284.56" y="686" font-size="18" fill="#f4f4f4" text-anchor="middle" textLength="42.8" lengthAdjust="spacingAndGlyphs">Green</text>
<text x="1362.29" y="686" font-size="18" fill="#f4f4f4" text-anchor="middle" textLength="30.6" lengthAdjust="spacingAndGlyphs">Blue</text>
<text x="1440.02" y="686" font-size="18" fill="#f4f4f4" text-anchor="middle" textLength="34.2" lengthAdjust="spacingAndGlyphs">Cyan</text>
<text x="1517.75" y="686" font-size="18" fill="#f4f4f4" text-anchor="middle" textLength="61.9" lengthAdjust="spacingAndGlyphs">Magenta</text>
<text x="1595.48" y="686" font-size="18" fill="#f4f4f4" text-anchor="middle" textLength="44.9" lengthAdjust="spacingAndGlyphs">Yellow</text>
<clipPath id="tclip"><rect x="997.5" y="696" width="633" height="170"/></clipPath>
<g clip-path="url(#tclip)">
<rect x="997.5" y="696" width="633" height="31" fill="#3b3b3b" />
<text x="1010.5" y="718.3" font-size="18" fill="#f4f4f4" font-weight="bold" textLength="64" lengthAdjust="spacingAndGlyphs">x: CIE31</text>
<text x="1094.6" y="718.3" font-size="18" fill="#f0f0f0" textLength="50" lengthAdjust="spacingAndGlyphs">0,3109</text>
<text x="1172.33" y="718.3" font-size="18" fill="#f0f0f0" textLength="50" lengthAdjust="spacingAndGlyphs">0,6472</text>
<text x="1250.06" y="718.3" font-size="18" fill="#f0f0f0" textLength="50" lengthAdjust="spacingAndGlyphs">0,3004</text>
<text x="1327.79" y="718.3" font-size="18" fill="#f0f0f0" textLength="50" lengthAdjust="spacingAndGlyphs">0,1510</text>
<text x="1405.52" y="718.3" font-size="18" fill="#f0f0f0" textLength="50" lengthAdjust="spacingAndGlyphs">0,2233</text>
<text x="1483.25" y="718.3" font-size="18" fill="#f0f0f0" textLength="50" lengthAdjust="spacingAndGlyphs">0,3173</text>
<text x="1560.98" y="718.3" font-size="18" fill="#f0f0f0" textLength="50" lengthAdjust="spacingAndGlyphs">0,4194</text>
<rect x="997.5" y="727" width="633" height="31" fill="#808080" />
<text x="1010.5" y="749.3" font-size="18" fill="#f4f4f4" font-weight="bold" textLength="64" lengthAdjust="spacingAndGlyphs">y: CIE31</text>
<text x="1094.6" y="749.3" font-size="18" fill="#f0f0f0" textLength="50" lengthAdjust="spacingAndGlyphs">0,3281</text>
<text x="1172.33" y="749.3" font-size="18" fill="#f0f0f0" textLength="50" lengthAdjust="spacingAndGlyphs">0,3329</text>
<text x="1250.06" y="749.3" font-size="18" fill="#f0f0f0" textLength="50" lengthAdjust="spacingAndGlyphs">0,6044</text>
<text x="1327.79" y="749.3" font-size="18" fill="#f0f0f0" textLength="50" lengthAdjust="spacingAndGlyphs">0,0630</text>
<text x="1405.52" y="749.3" font-size="18" fill="#f0f0f0" textLength="50" lengthAdjust="spacingAndGlyphs">0,3264</text>
<text x="1483.25" y="749.3" font-size="18" fill="#f0f0f0" textLength="50" lengthAdjust="spacingAndGlyphs">0,1533</text>
<text x="1560.98" y="749.3" font-size="18" fill="#f0f0f0" textLength="50" lengthAdjust="spacingAndGlyphs">0,5075</text>
<rect x="997.5" y="758" width="633" height="31" fill="#3b3b3b" />
<text x="1010.5" y="780.3" font-size="18" fill="#f4f4f4" font-weight="bold" textLength="12.5" lengthAdjust="spacingAndGlyphs">Y</text>
<text x="1094.6" y="780.3" font-size="18" fill="#f0f0f0" textLength="68.4" lengthAdjust="spacingAndGlyphs">301,9346</text>
<text x="1172.33" y="780.3" font-size="18" fill="#f0f0f0" textLength="58.5" lengthAdjust="spacingAndGlyphs">62,3087</text>
<text x="1250.06" y="780.3" font-size="18" fill="#f0f0f0" textLength="68.4" lengthAdjust="spacingAndGlyphs">212,3296</text>
<text x="1327.79" y="780.3" font-size="18" fill="#f0f0f0" textLength="58.5" lengthAdjust="spacingAndGlyphs">23,0344</text>
<text x="1405.52" y="780.3" font-size="18" fill="#f0f0f0" textLength="68.4" lengthAdjust="spacingAndGlyphs">236,6789</text>
<text x="1483.25" y="780.3" font-size="18" fill="#f0f0f0" textLength="58.5" lengthAdjust="spacingAndGlyphs">85,0894</text>
<text x="1560.98" y="780.3" font-size="18" fill="#f0f0f0" textLength="68.4" lengthAdjust="spacingAndGlyphs">276,4045</text>
<rect x="997.5" y="789" width="633" height="31" fill="#808080" />
<text x="1010.5" y="811.3" font-size="18" fill="#f4f4f4" font-weight="bold" textLength="65.6" lengthAdjust="spacingAndGlyphs">Target Y</text>
<text x="1094.6" y="811.3" font-size="18" fill="#f0f0f0" textLength="68.4" lengthAdjust="spacingAndGlyphs">302,6376</text>
<text x="1172.33" y="811.3" font-size="18" fill="#f0f0f0" textLength="58.5" lengthAdjust="spacingAndGlyphs">64,3577</text>
<text x="1250.06" y="811.3" font-size="18" fill="#f0f0f0" textLength="68.4" lengthAdjust="spacingAndGlyphs">216,4338</text>
<text x="1327.79" y="811.3" font-size="18" fill="#f0f0f0" textLength="58.5" lengthAdjust="spacingAndGlyphs">21,8461</text>
<text x="1405.52" y="811.3" font-size="18" fill="#f0f0f0" textLength="68.4" lengthAdjust="spacingAndGlyphs">238,2799</text>
<text x="1483.25" y="811.3" font-size="18" fill="#f0f0f0" textLength="58.5" lengthAdjust="spacingAndGlyphs">86,2038</text>
<text x="1560.98" y="811.3" font-size="18" fill="#f0f0f0" textLength="68.4" lengthAdjust="spacingAndGlyphs">280,7915</text>
<rect x="997.5" y="820" width="633" height="31" fill="#3b3b3b" />
<text x="1010.5" y="842.3" font-size="18" fill="#f4f4f4" font-weight="bold" textLength="65" lengthAdjust="spacingAndGlyphs">ΔE 2000</text>
<text x="1094.6" y="842.3" font-size="18" fill="#f0f0f0" textLength="50" lengthAdjust="spacingAndGlyphs">0,8331</text>
<text x="1172.33" y="842.3" font-size="18" fill="#f0f0f0" textLength="50" lengthAdjust="spacingAndGlyphs">1,9519</text>
<text x="1250.06" y="842.3" font-size="18" fill="#f0f0f0" textLength="50" lengthAdjust="spacingAndGlyphs">0,4975</text>
<text x="1327.79" y="842.3" font-size="18" fill="#f0f0f0" textLength="50" lengthAdjust="spacingAndGlyphs">0,7582</text>
<text x="1405.52" y="842.3" font-size="18" fill="#f0f0f0" textLength="50" lengthAdjust="spacingAndGlyphs">0,5431</text>
<text x="1483.25" y="842.3" font-size="18" fill="#f0f0f0" textLength="50" lengthAdjust="spacingAndGlyphs">0,4461</text>
<text x="1560.98" y="842.3" font-size="18" fill="#f0f0f0" textLength="50" lengthAdjust="spacingAndGlyphs">0,4055</text>
<rect x="997.5" y="851" width="633" height="31" fill="#808080" />
<text x="1010.5" y="873.3" font-size="18" fill="#f4f4f4" font-weight="bold" textLength="52" lengthAdjust="spacingAndGlyphs">ΔE ITP</text>
<text x="1094.6" y="873.3" font-size="18" fill="#f0f0f0" textLength="50" lengthAdjust="spacingAndGlyphs">1,1356</text>
<text x="1172.33" y="873.3" font-size="18" fill="#f0f0f0" textLength="50" lengthAdjust="spacingAndGlyphs">8,2672</text>
<text x="1250.06" y="873.3" font-size="18" fill="#f0f0f0" textLength="50" lengthAdjust="spacingAndGlyphs">2,4755</text>
<text x="1327.79" y="873.3" font-size="18" fill="#f0f0f0" textLength="50" lengthAdjust="spacingAndGlyphs">3,8284</text>
<text x="1405.52" y="873.3" font-size="18" fill="#f0f0f0" textLength="50" lengthAdjust="spacingAndGlyphs">1,1485</text>
<text x="1483.25" y="873.3" font-size="18" fill="#f0f0f0" textLength="50" lengthAdjust="spacingAndGlyphs">3,5709</text>
<text x="1560.98" y="873.3" font-size="18" fill="#f0f0f0" textLength="50" lengthAdjust="spacingAndGlyphs">1,8167</text>
</g>
<rect x="1630.8" y="696" width="16.9" height="170" fill="#5a5a5a" />
<rect x="1632.6" y="697.2" width="13.4" height="16.6" rx="3" fill="#6c6c6c" stroke="#777" stroke-width="0.8"/>
<path d="M1633.6,708.9 L1639.2,703.6 L1644.8,708.9 Z" fill="#3a3a3a"/>
<rect x="1633.6" y="717.8" width="11.6" height="104.4" rx="5.8" fill="#454545"/>
<rect x="1632.6" y="848" width="13.4" height="16.4" rx="3" fill="#6c6c6c" stroke="#777" stroke-width="0.8"/>
<path d="M1633.6,853.2 L1639.2,858.5 L1644.8,853.2 Z" fill="#3a3a3a"/>
<rect x="997.5" y="866" width="633" height="20" fill="#4e4e4e" />
<rect x="1630.5" y="866" width="17.2" height="20" fill="#3a3a3a" />
<rect x="999" y="868" width="14" height="16" rx="3" fill="#6a6a6a" stroke="#777" stroke-width="0.8"/>
<path d="M1008.5,871.5 L1003.3,876 L1008.5,880.5 Z" fill="#3a3a3a"/>
<rect x="1017" y="868.5" width="525" height="15.5" rx="7.7" fill="#3d3d3d"/>
<rect x="1615" y="868" width="14" height="16" rx="3" fill="#6a6a6a" stroke="#777" stroke-width="0.8"/>
<path d="M1619.5,871.5 L1624.7,876 L1619.5,880.5 Z" fill="#3a3a3a"/>
<rect x="2.5" y="929.8" width="155.3" height="82" rx="5" fill="url(#bbg)"/>
<rect x="8.2" y="935.9" width="143.6" height="45.3" rx="5.5" fill="#c0c0c0"/>
<rect x="8.7" y="936.4" width="142.6" height="44.3" rx="5" fill="none" stroke="#000" stroke-opacity="0.18" stroke-width="1.2"/>
<text x="80.15" y="999.6" font-size="13" fill="#2a2a2a" text-anchor="middle" font-weight="bold" textLength="36.3" lengthAdjust="spacingAndGlyphs">White</text>
<rect x="160.5" y="929.8" width="155.3" height="82" rx="5" fill="url(#bbg)"/>
<rect x="166.2" y="935.9" width="143.6" height="45.3" rx="5.5" fill="#c00000"/>
<rect x="166.7" y="936.4" width="142.6" height="44.3" rx="5" fill="none" stroke="#000" stroke-opacity="0.18" stroke-width="1.2"/>
<text x="238.15" y="999.6" font-size="13" fill="#2a2a2a" text-anchor="middle" font-weight="bold" textLength="23" lengthAdjust="spacingAndGlyphs">Red</text>
<rect x="318.5" y="929.8" width="155.3" height="82" rx="5" fill="url(#bbg)"/>
<rect x="324.2" y="935.9" width="143.6" height="45.3" rx="5.5" fill="#00c000"/>
<rect x="324.7" y="936.4" width="142.6" height="44.3" rx="5" fill="none" stroke="#000" stroke-opacity="0.18" stroke-width="1.2"/>
<text x="396.15" y="999.6" font-size="13" fill="#2a2a2a" text-anchor="middle" font-weight="bold" textLength="36.5" lengthAdjust="spacingAndGlyphs">Green</text>
<rect x="476.5" y="929.8" width="155.3" height="82" rx="5" fill="url(#bbg)"/>
<rect x="482.2" y="935.9" width="143.6" height="45.3" rx="5.5" fill="#0000c0"/>
<rect x="482.7" y="936.4" width="142.6" height="44.3" rx="5" fill="none" stroke="#000" stroke-opacity="0.18" stroke-width="1.2"/>
<text x="554.15" y="999.6" font-size="13" fill="#2a2a2a" text-anchor="middle" font-weight="bold" textLength="27" lengthAdjust="spacingAndGlyphs">Blue</text>
<rect x="634.5" y="929.8" width="155.3" height="82" rx="5" fill="url(#bbg)"/>
<rect x="640.2" y="935.9" width="143.6" height="45.3" rx="5.5" fill="#00c0c0"/>
<rect x="640.7" y="936.4" width="142.6" height="44.3" rx="5" fill="none" stroke="#000" stroke-opacity="0.18" stroke-width="1.2"/>
<text x="712.15" y="999.6" font-size="13" fill="#2a2a2a" text-anchor="middle" font-weight="bold" textLength="29" lengthAdjust="spacingAndGlyphs">Cyan</text>
<rect x="792.5" y="929.8" width="155.3" height="82" rx="5" fill="url(#bbg)"/>
<rect x="798.2" y="935.9" width="143.6" height="45.3" rx="5.5" fill="#c000c0"/>
<rect x="798.7" y="936.4" width="142.6" height="44.3" rx="5" fill="none" stroke="#000" stroke-opacity="0.18" stroke-width="1.2"/>
<text x="870.15" y="999.6" font-size="13" fill="#2a2a2a" text-anchor="middle" font-weight="bold" textLength="54.5" lengthAdjust="spacingAndGlyphs">Magenta</text>
<rect x="950.5" y="929.8" width="155.3" height="82" rx="5" fill="url(#bbg)"/>
<rect x="956.2" y="935.9" width="143.6" height="45.3" rx="5.5" fill="#c0c000"/>
<rect x="956.7" y="936.4" width="142.6" height="44.3" rx="5" fill="none" stroke="#000" stroke-opacity="0.18" stroke-width="1.2"/>
<text x="1028.15" y="999.6" font-size="13" fill="#2a2a2a" text-anchor="middle" font-weight="bold" textLength="40" lengthAdjust="spacingAndGlyphs">Yellow</text>
<rect x="1108.5" y="929.8" width="155.3" height="82" rx="5" fill="url(#bbsel)"/>
<rect x="1114.2" y="935.9" width="143.6" height="45.3" rx="5.5" fill="#ffffff"/>
<path d="M1115,975 V941 Q1115,936.5 1119.5,936.5 H1248.5" fill="none" stroke="#000" stroke-opacity="0.25" stroke-width="1.3"/>
<text x="1186.15" y="999.6" font-size="13" fill="#ffffff" text-anchor="middle" font-weight="bold" textLength="35.8" lengthAdjust="spacingAndGlyphs">100W</text>
<rect x="1267.2" y="929.3" width="59.8" height="85" rx="5" fill="url(#lbg)"/>
<rect x="1267.2" y="929.3" width="59.8" height="22.7" rx="5" fill="url(#cbg)"/>
<line x1="1267.2" y1="952.3" x2="1327" y2="952.3" stroke="#4a4a4a" stroke-width="1.2" />
<circle cx="1297.4" cy="941.2" r="10" fill="url(#icg)"/>
<path d="M1292,943.8 L1297.4,938.4 L1302.8,943.8 Z" fill="#333"/>
<rect x="1278.6" y="961.4" width="36.6" height="35.8" rx="5" fill="#b0b0b0" stroke="#1e1e1e" stroke-width="3"/>
<rect x="1280.5" y="979" width="33" height="16.5" fill="#8a8a8a" fill-opacity="0.55"/>
<rect x="1289" y="971" width="17.2" height="17" fill="#000" />
<rect x="1289" y="971" width="17.2" height="8" fill="#1a1a1a" />
<rect x="1327" y="929.3" width="59.3" height="37.4" fill="url(#cbg)" />
<line x1="1386.7" y1="929.3" x2="1386.7" y2="966.7" stroke="#2e2e2e" stroke-width="1.2" />
<rect x="1387" y="929.3" width="55.6" height="37.4" fill="url(#cbg)" />
<line x1="1443" y1="929.3" x2="1443" y2="966.7" stroke="#2e2e2e" stroke-width="1.2" />
<rect x="1442.8" y="929.3" width="55.3" height="37.4" fill="url(#cbg)" />
<line x1="1498.5" y1="929.3" x2="1498.5" y2="966.7" stroke="#2e2e2e" stroke-width="1.2" />
<rect x="1499.9" y="929.3" width="55.5" height="37.4" fill="url(#cbg)" />
<line x1="1555.8" y1="929.3" x2="1555.8" y2="966.7" stroke="#2e2e2e" stroke-width="1.2" />
<rect x="1555.9" y="929.3" width="55.1" height="37.4" fill="url(#cbg)" />
<line x1="1611.4" y1="929.3" x2="1611.4" y2="966.7" stroke="#2e2e2e" stroke-width="1.2" />
<rect x="1327" y="966.7" width="340" height="1.6" fill="#2e2e2e" />
<rect x="1327" y="968.2" width="171.3" height="40" fill="url(#cbg2)" />
<rect x="1498.6" y="968.2" width="1.4" height="40" fill="#2e2e2e" />
<rect x="1500" y="968.2" width="166" height="40" fill="url(#cbg2)" />
<circle cx="1357" cy="948.1" r="12" fill="url(#icg)"/>
<circle cx="1414.5" cy="948" r="12" fill="url(#icg)"/>
<circle cx="1471" cy="948.2" r="12" fill="url(#icg)"/>
<circle cx="1527" cy="948" r="12" fill="url(#icg)"/>
<circle cx="1583.3" cy="948" r="12" fill="url(#icg)"/>
<circle cx="1367.2" cy="986.5" r="12" fill="url(#icg)"/>
<circle cx="1633.5" cy="986.8" r="12" fill="url(#icg)"/>
<rect x="1352.2" y="943.5" width="9.8" height="9.8" fill="#333" />
<path d="M1410.5,942 L1421,948.2 L1410.5,954.4 Z" fill="#333"/>
<path d="M1466.2,941.5 H1464.5 V954.5 H1466.2 M1475.8,941.5 H1477.5 V954.5 H1475.8" fill="none" stroke="#333" stroke-width="2.2"/>
<path d="M1468.5,948 H1473.5" stroke="#333" stroke-width="1.6" stroke-dasharray="1.5,1"/>
<path d="M1527,948 C1524,944 1519.5,944 1519.5,948 C1519.5,952 1524,952 1527,948 C1530,944 1534.5,944 1534.5,948 C1534.5,952 1530,952 1527,948 Z" fill="none" stroke="#333" stroke-width="2.2"/>
<path d="M1577.5,950 A6,6 0 0 1 1588,944.5 M1589,946 A6,6 0 0 1 1578.5,951.5" fill="none" stroke="#333" stroke-width="2.4"/>
<path d="M1586,941.5 L1590.5,945.5 L1585,946.5 Z M1580.5,954.5 L1576,950.5 L1581.5,949.5 Z" fill="#333"/>
<path d="M1369.5,981 L1364.5,986.5 L1369.5,992 M1374,981 L1369,986.5 L1374,992" fill="none" stroke="#333" stroke-width="1.8"/>
<path d="M1631,981.3 L1636,986.8 L1631,992.3 M1626.5,981.3 L1631.5,986.8 L1626.5,992.3" fill="none" stroke="#333" stroke-width="1.8"/>
<text x="1400.3" y="996.6" font-size="27" fill="#303030" font-weight="bold" textLength="63" lengthAdjust="spacingAndGlyphs">Back</text>
<text x="1533.7" y="996.4" font-size="27" fill="#303030" font-weight="bold" textLength="65" lengthAdjust="spacingAndGlyphs">Next</text>
<g filter="url(#astsh)"><rect x="1635" y="929.6" width="6.8" height="33.8" rx="2" fill="#e00000" transform="rotate(0 1638.4 946.5)"/><rect x="1635" y="929.6" width="6.8" height="33.8" rx="2" fill="#e00000" transform="rotate(60 1638.4 946.5)"/><rect x="1635" y="929.6" width="6.8" height="33.8" rx="2" fill="#e00000" transform="rotate(120 1638.4 946.5)"/></g>
</svg>
<div style="position:absolute;left:0;top:0;width:1670px;height:1006px;pointer-events:none"><div class="cie" style="clip-path:polygon(1658.55px 193.47px,1657.02px 193.29px,1655.4px 193.11px,1653.7px 192.91px,1651.89px 192.7px,1649.99px 192.49px,1647.99px 192.27px,1645.89px 192.03px,1643.7px 191.79px,1641.41px 191.53px,1639.01px 191.25px,1636.52px 190.97px,1633.92px 190.67px,1631.23px 190.35px,1628.45px 190.03px,1625.57px 189.7px,1622.6px 189.36px,1619.53px 189.01px,1616.37px 188.64px,1613.12px 188.27px,1609.78px 187.88px,1606.37px 187.49px,1602.86px 187.08px,1599.22px 186.66px,1595.43px 186.23px,1591.52px 185.78px,1587.48px 185.32px,1583.31px 184.85px,1578.97px 184.36px,1574.47px 183.84px,1569.79px 183.31px,1564.95px 182.75px,1559.95px 182.17px,1554.78px 181.57px,1549.42px 180.96px,1543.88px 180.32px,1538.15px 179.66px,1532.25px 178.98px,1526.2px 178.28px,1519.99px 177.57px,1513.64px 176.84px,1507.12px 176.1px,1500.45px 175.34px,1493.64px 174.57px,1486.69px 173.78px,1479.58px 172.97px,1472.29px 172.13px,1464.88px 171.28px,1457.41px 170.42px,1449.94px 169.57px,1442.47px 168.71px,1434.96px 167.85px,1427.41px 166.98px,1419.82px 166.11px,1412.17px 165.23px,1404.44px 164.34px,1396.63px 163.44px,1388.78px 162.53px,1380.96px 161.63px,1373.22px 160.74px,1365.53px 159.86px,1357.87px 158.98px,1350.26px 158.11px,1342.73px 157.25px,1335.29px 156.4px,1327.95px 155.56px,1320.68px 154.73px,1313.5px 153.9px,1306.41px 153.09px,1299.44px 152.29px,1292.59px 151.5px,1285.83px 150.72px,1279.18px 149.96px,1272.63px 149.2px,1266.2px 148.47px,1259.89px 147.74px,1253.69px 147.03px,1247.59px 146.33px,1241.61px 145.65px,1235.73px 144.98px,1229.97px 144.33px,1224.31px 143.69px,1218.77px 143.06px,1213.33px 142.45px,1208px 141.86px,1202.78px 141.27px,1197.67px 140.7px,1192.67px 140.14px,1187.77px 139.59px,1182.96px 139.06px,1178.24px 138.55px,1173.62px 138.05px,1169.09px 137.57px,1164.65px 137.1px,1160.3px 136.64px,1156.05px 136.2px,1151.89px 135.77px,1147.81px 135.36px,1143.81px 134.96px,1139.88px 134.58px,1136.02px 134.21px,1132.24px 133.86px,1128.53px 133.53px,1124.88px 133.21px,1121.29px 132.91px,1117.75px 132.62px,1114.28px 132.36px,1110.86px 132.11px,1107.5px 131.88px,1104.18px 131.68px,1100.91px 131.49px,1097.71px 131.32px,1094.55px 131.17px,1091.42px 131.04px,1088.3px 130.93px,1085.21px 130.85px,1082.16px 130.78px,1079.12px 130.74px,1076.1px 130.73px,1073.08px 130.74px,1070.05px 130.78px,1067.01px 130.82px,1063.99px 130.9px,1061.01px 131.04px,1058.1px 131.24px,1055.23px 131.5px,1052.4px 131.78px,1049.63px 132.14px,1046.94px 132.62px,1044.35px 133.27px,1041.84px 134.06px,1039.41px 134.96px,1037.07px 136.02px,1034.86px 137.27px,1032.8px 138.76px,1030.88px 140.47px,1029.07px 142.38px,1027.41px 144.5px,1025.92px 146.87px,1024.65px 149.5px,1023.58px 152.37px,1022.68px 155.46px,1021.97px 158.81px,1021.48px 162.45px,1021.23px 166.43px,1021.2px 170.69px,1021.37px 175.22px,1021.78px 180.07px,1022.44px 185.33px,1023.4px 191.07px,1024.63px 197.26px,1026.1px 203.86px,1027.86px 210.9px,1029.94px 218.42px,1032.38px 226.45px,1035.18px 235.05px,1038.32px 244.2px,1041.79px 253.8px,1045.6px 263.79px,1049.73px 274.07px,1054.2px 284.76px,1059.02px 295.91px,1064.16px 307.37px,1069.59px 318.97px,1075.29px 330.55px,1081.36px 342.24px,1087.8px 354.13px,1094.49px 366.06px,1101.27px 377.86px,1108.01px 389.38px,1114.77px 400.72px,1121.64px 411.98px,1128.53px 423.01px,1135.35px 433.66px,1142px 443.79px,1148.51px 453.4px,1154.96px 462.6px,1161.27px 471.37px,1167.42px 479.68px,1173.33px 487.49px,1179.05px 494.82px,1184.61px 501.68px,1189.96px 508.07px,1195.06px 513.99px,1199.87px 519.45px,1204.34px 524.35px,1208.5px 528.68px,1212.43px 532.59px,1216.19px 536.24px,1219.87px 539.78px,1223.47px 543.18px,1226.92px 546.35px,1230.25px 549.31px,1233.45px 552.11px,1236.53px 554.79px,1239.48px 557.33px,1242.29px 559.69px,1244.98px 561.92px,1247.57px 564.05px,1250.09px 566.12px,1252.54px 568.13px,1254.89px 570.06px,1257.16px 571.91px,1259.32px 573.67px,1261.36px 575.34px,1263.28px 576.92px,1265.08px 578.4px,1266.78px 579.8px,1268.4px 581.14px,1269.96px 582.44px,1271.45px 583.7px,1272.87px 584.91px,1274.22px 586.07px,1275.51px 587.18px,1276.75px 588.22px,1277.95px 589.21px,1279.09px 590.14px,1280.18px 591.01px,1281.2px 591.83px,1282.15px 592.58px,1283.01px 593.26px,1283.8px 593.88px,1284.53px 594.44px,1285.22px 594.96px,1285.87px 595.44px,1286.51px 595.89px,1287.1px 596.3px,1287.66px 596.67px,1288.17px 596.99px,1288.64px 597.28px,1289.04px 597.51px,1289.39px 597.71px,1289.7px 597.86px,1289.98px 597.98px,1290.23px 598.07px,1290.46px 598.12px,1290.65px 598.12px,1290.81px 598.1px,1290.96px 598.07px,1291.12px 598.06px,1291.27px 598.06px,1291.42px 598.06px,1291.57px 598.06px,1291.7px 598.06px,1291.83px 598.06px,1291.95px 598.06px,1292.06px 598.07px,1292.16px 598.07px,1292.26px 598.07px,1292.36px 598.05px,1292.45px 598.01px,1292.54px 597.95px,1292.62px 597.89px,1292.7px 597.83px,1292.77px 597.79px,1292.85px 597.77px,1292.92px 597.78px,1293px 597.79px,1293.06px 597.8px,1293.13px 597.78px,1293.18px 597.74px,1293.23px 597.68px,1293.28px 597.62px,1293.32px 597.56px,1293.36px 597.52px,1293.4px 597.5px,1293.44px 597.5px,1293.48px 597.5px,1293.52px 597.51px,1293.54px 597.51px,1659.5px 222.05px,1659.5px 193.58px)"><div class="cp" style="background:#000"></div><div class="cl"><div class="cp" style="clip-path:polygon(1241.11px 114.5px,1014.01px 114.49px,1014.07px 266.03px,1230.41px 228.64px);background:conic-gradient(from -44.2deg at 1206.17px 476.71px,#000000 0deg,#000000 0.82deg,#000000 1.64deg,#000000 2.46deg,#000000 3.28deg,#000000 4.1deg,#000000 4.91deg,#000000 5.73deg,#000000 6.55deg,#000000 7.37deg,#000000 8.19deg,#000000 9.01deg,#000000 9.83deg,#000000 10.65deg,#000000 11.47deg,#000000 12.29deg,#000000 13.11deg,#000000 13.93deg,#000000 14.74deg,#000000 15.56deg,#000000 16.38deg,#000000 17.2deg,#000000 18.02deg,#000000 18.84deg,#000000 19.66deg,#000000 20.48deg,#000000 21.3deg,#000000 22.12deg,#000000 22.94deg,#000000 23.76deg,#000000 24.57deg,#000000 25.39deg,#000000 26.21deg,#000000 27.03deg,#000000 27.85deg,#000000 28.67deg,#000000 29.49deg,#000000 30.31deg,#000000 31.13deg,#000000 31.95deg,#000000 32.77deg,#000000 33.58deg,#000000 34.4deg,#020000 35.22deg,#080000 36.04deg,#0f0000 36.86deg,#160000 37.68deg,#1d0000 38.5deg,#240000 39.32deg,#2c0000 40.14deg,#340000 40.96deg,#3c0000 41.78deg,#440000 42.6deg,#4d0000 43.41deg,#560000 44.23deg,#5f0000 45.05deg,#690000 45.87deg,#730000 46.69deg,#7d0000 47.51deg,#880000 48.33deg,#930000 49.15deg,#990000 49.97deg,#990000 50.79deg,#990000 51.61deg)"></div><div class="cp" style="clip-path:polygon(1014.08px 265.04px,1014.11px 616.64px,1611.45px 616.44px,1229.73px 227.52px);background:conic-gradient(from 133.5deg at 1152.45px 149.72px,#990000 0deg,#990000 1.56deg,#910000 3.13deg,#860000 4.69deg,#7d0000 6.25deg,#730000 7.81deg,#6a0000 9.38deg,#620000 10.94deg,#5a0000 12.5deg,#530000 14.06deg,#4b0000 15.63deg,#450000 17.19deg,#3e0000 18.75deg,#380000 20.31deg,#310000 21.88deg,#2c0000 23.44deg,#260000 25deg,#200000 26.56deg,#1b0000 28.13deg,#160000 29.69deg,#110000 31.25deg,#0c0000 32.81deg,#080000 34.38deg,#030000 35.94deg,#000000 37.5deg,#000000 39.06deg,#000000 40.63deg,#000000 42.19deg,#000000 43.75deg,#000000 45.31deg,#000000 46.88deg,#000000 48.44deg,#000000 50deg,#000000 51.56deg,#000000 53.13deg,#000000 54.69deg,#000000 56.25deg,#000000 57.81deg,#000000 59.38deg,#000000 60.94deg,#000000 62.5deg,#000000 64.06deg,#000000 65.63deg,#000000 67.19deg,#000000 68.75deg,#000000 70.31deg,#000000 71.88deg,#000000 73.44deg,#000000 75deg,#000000 76.56deg,#000000 78.13deg,#000000 79.69deg,#000000 81.25deg,#000000 82.81deg,#000000 84.38deg,#000000 85.94deg,#000000 87.5deg,#000000 89.06deg,#000000 90.63deg,#000000 92.19deg,#000000 93.75deg,#000000 95.32deg,#000000 96.88deg,#000000 98.44deg)"></div><div class="cp" style="clip-path:polygon(1611.06px 616.83px,1664.94px 616.77px,1665.01px 114.28px,1239.82px 114.36px,1228.94px 228px);background:#990000"></div></div><div class="cl"><div class="cp" style="clip-path:polygon(1611.06px 616.83px,1664.94px 616.77px,1665.01px 114.28px,1239.82px 114.36px,1228.94px 228px);background:conic-gradient(from 3.41deg at 1206.17px 476.71px,#009900 0deg,#009900 1.71deg,#008700 3.42deg,#007500 5.12deg,#006600 6.83deg,#005900 8.54deg,#004f00 10.25deg,#004600 11.96deg,#003e00 13.66deg,#003700 15.37deg,#003000 17.08deg,#002b00 18.79deg,#002600 20.5deg,#002100 22.2deg,#001d00 23.91deg,#001900 25.62deg,#001500 27.33deg,#001200 29.04deg,#000f00 30.74deg,#000c00 32.45deg,#000a00 34.16deg,#000700 35.87deg,#000500 37.58deg,#000300 39.28deg,#000100 40.99deg,#000000 42.7deg,#000000 44.41deg,#000000 46.12deg,#000000 47.82deg,#000000 49.53deg,#000000 51.24deg,#000000 52.95deg,#000000 54.66deg,#000000 56.36deg,#000000 58.07deg,#000000 59.78deg,#000000 61.49deg,#000000 63.2deg,#000000 64.9deg,#000000 66.61deg,#000000 68.32deg,#000000 70.03deg,#000000 71.74deg,#000000 73.44deg,#000000 75.15deg,#000000 76.86deg,#000000 78.57deg,#000000 80.28deg,#000000 81.98deg,#000000 83.69deg,#000000 85.4deg,#000000 87.11deg,#000000 88.82deg,#000000 90.52deg,#000000 92.23deg,#000000 93.94deg,#000000 95.65deg,#000000 97.36deg,#000000 99.07deg,#000000 100.77deg,#000000 102.48deg,#000000 104.19deg,#000000 105.9deg,#000000 107.61deg)"></div><div class="cp" style="clip-path:polygon(1014.08px 265.04px,1014.11px 616.64px,1611.45px 616.44px,1229.73px 227.52px);background:conic-gradient(from -195.78deg at 1503.97px 180.81px,#000000 0deg,#000000 1.55deg,#000000 3.11deg,#000000 4.66deg,#000000 6.22deg,#000000 7.77deg,#000000 9.33deg,#000000 10.88deg,#000000 12.44deg,#000000 13.99deg,#000000 15.55deg,#000000 17.1deg,#000000 18.66deg,#000000 20.21deg,#000000 21.77deg,#000000 23.32deg,#000000 24.88deg,#000000 26.43deg,#000000 27.99deg,#000000 29.54deg,#000000 31.1deg,#000000 32.65deg,#000000 34.21deg,#000000 35.76deg,#000000 37.32deg,#000000 38.87deg,#000000 40.43deg,#000000 41.98deg,#000000 43.54deg,#000000 45.09deg,#000000 46.65deg,#000000 48.2deg,#000000 49.75deg,#000000 51.31deg,#000000 52.86deg,#000000 54.42deg,#000000 55.97deg,#000000 57.53deg,#000000 59.08deg,#000000 60.64deg,#000200 62.19deg,#000400 63.75deg,#000600 65.3deg,#000900 66.86deg,#000c00 68.41deg,#000f00 69.97deg,#001200 71.52deg,#001500 73.08deg,#001900 74.63deg,#001d00 76.19deg,#002200 77.74deg,#002600 79.3deg,#002c00 80.85deg,#003200 82.41deg,#003800 83.96deg,#004000 85.52deg,#004800 87.07deg,#005200 88.63deg,#005c00 90.18deg,#006900 91.74deg,#007800 93.29deg,#008a00 94.85deg,#009900 96.4deg,#009900 97.96deg)"></div><div class="cp" style="clip-path:polygon(1241.11px 114.5px,1014.01px 114.49px,1014.07px 266.03px,1230.41px 228.64px);background:#009900"></div></div><div class="cl"><div class="cp" style="clip-path:polygon(1611.06px 616.83px,1664.94px 616.77px,1665.01px 114.28px,1239.82px 114.36px,1228.94px 228px);background:conic-gradient(from 66.4deg at 1152.45px 149.72px,#000000 0deg,#000000 1.13deg,#000000 2.26deg,#000000 3.39deg,#000000 4.51deg,#000000 5.64deg,#000000 6.77deg,#000000 7.9deg,#000000 9.03deg,#000000 10.16deg,#000000 11.29deg,#000000 12.41deg,#000000 13.54deg,#000000 14.67deg,#000000 15.8deg,#000000 16.93deg,#000000 18.06deg,#000000 19.19deg,#000000 20.31deg,#000000 21.44deg,#000000 22.57deg,#000000 23.7deg,#000000 24.83deg,#000000 25.96deg,#000000 27.09deg,#000000 28.21deg,#000001 29.34deg,#000004 30.47deg,#000006 31.6deg,#000009 32.73deg,#00000b 33.86deg,#00000e 34.99deg,#000011 36.11deg,#000014 37.24deg,#000017 38.37deg,#00001a 39.5deg,#00001d 40.63deg,#000020 41.76deg,#000023 42.89deg,#000027 44.01deg,#00002a 45.14deg,#00002e 46.27deg,#000031 47.4deg,#000035 48.53deg,#000039 49.66deg,#00003d 50.79deg,#000041 51.91deg,#000045 53.04deg,#00004a 54.17deg,#00004e 55.3deg,#000053 56.43deg,#000058 57.56deg,#00005d 58.69deg,#000062 59.81deg,#000068 60.94deg,#00006e 62.07deg,#000074 63.2deg,#00007a 64.33deg,#000081 65.46deg,#000088 66.59deg,#00008f 67.71deg,#000097 68.84deg,#000099 69.97deg,#000099 71.1deg)"></div><div class="cp" style="clip-path:polygon(1241.11px 114.5px,1014.01px 114.49px,1014.07px 266.03px,1230.41px 228.64px);background:conic-gradient(from -101.83deg at 1503.97px 180.81px,#000099 0deg,#000099 0.44deg,#000099 0.88deg,#000099 1.33deg,#000099 1.77deg,#000096 2.21deg,#000090 2.65deg,#000089 3.1deg,#000083 3.54deg,#00007e 3.98deg,#000078 4.42deg,#000072 4.87deg,#00006d 5.31deg,#000067 5.75deg,#000062 6.19deg,#00005d 6.63deg,#000058 7.08deg,#000053 7.52deg,#00004e 7.96deg,#000049 8.4deg,#000045 8.85deg,#000040 9.29deg,#00003c 9.73deg,#000037 10.17deg,#000033 10.62deg,#00002f 11.06deg,#00002b 11.5deg,#000027 11.94deg,#000023 12.38deg,#00001f 12.83deg,#00001b 13.27deg,#000018 13.71deg,#000014 14.15deg,#000010 14.6deg,#00000d 15.04deg,#00000a 15.48deg,#000006 15.92deg,#000003 16.37deg,#000000 16.81deg,#000000 17.25deg,#000000 17.69deg,#000000 18.14deg,#000000 18.58deg,#000000 19.02deg,#000000 19.46deg,#000000 19.9deg,#000000 20.35deg,#000000 20.79deg,#000000 21.23deg,#000000 21.67deg,#000000 22.12deg,#000000 22.56deg,#000000 23deg,#000000 23.44deg,#000000 23.89deg,#000000 24.33deg,#000000 24.77deg,#000000 25.21deg,#000000 25.65deg,#000000 26.1deg,#000000 26.54deg,#000000 26.98deg,#000000 27.42deg,#000000 27.87deg)"></div><div class="cp" style="clip-path:polygon(1014.08px 265.04px,1014.11px 616.64px,1611.45px 616.44px,1229.73px 227.52px);background:#000099"></div></div></div><div class="cie" style="clip-path:polygon(1503.97px 180.81px,1152.45px 149.72px,1206.17px 476.71px)"><div class="cp" style="background:#000"></div><div class="cl"><div class="cp" style="clip-path:polygon(1237px 156.61px,1151.88px 149.16px,1166.71px 239.82px,1230.23px 228.89px);background:conic-gradient(from -11.33deg at 1206.17px 476.71px,#000000 0deg,#000000 0.3deg,#000000 0.59deg,#000000 0.89deg,#000000 1.19deg,#000000 1.49deg,#000000 1.78deg,#030000 2.08deg,#0b0000 2.38deg,#120000 2.68deg,#180000 2.97deg,#1e0000 3.27deg,#240000 3.57deg,#290000 3.87deg,#2f0000 4.16deg,#340000 4.46deg,#390000 4.76deg,#3e0000 5.06deg,#430000 5.35deg,#480000 5.65deg,#4d0000 5.95deg,#520000 6.25deg,#570000 6.54deg,#5c0000 6.84deg,#600000 7.14deg,#650000 7.43deg,#6a0000 7.73deg,#6f0000 8.03deg,#740000 8.33deg,#780000 8.62deg,#7d0000 8.92deg,#820000 9.22deg,#870000 9.52deg,#8b0000 9.81deg,#900000 10.11deg,#950000 10.41deg,#9a0000 10.71deg,#9e0000 11deg,#a30000 11.3deg,#a80000 11.6deg,#ad0000 11.9deg,#b20000 12.19deg,#b70000 12.49deg,#bc0000 12.79deg,#c00000 13.09deg,#c50000 13.38deg,#ca0000 13.68deg,#cf0000 13.98deg,#d40000 14.27deg,#d90000 14.57deg,#de0000 14.87deg,#e40000 15.17deg,#e90000 15.46deg,#ee0000 15.76deg,#f30000 16.06deg,#f80000 16.36deg,#fe0000 16.65deg,#ff0000 16.95deg,#ff0000 17.25deg,#ff0000 17.55deg,#ff0000 17.84deg,#ff0000 18.14deg,#ff0000 18.44deg,#ff0000 18.74deg)"></div><div class="cp" style="clip-path:polygon(1166.63px 238.53px,1206.02px 477.5px,1342.35px 342.33px,1229.62px 227.52px);background:conic-gradient(from 133.5deg at 1152.45px 149.72px,#ff0000 0deg,#ff0000 0.62deg,#ff0000 1.24deg,#ff0000 1.87deg,#fb0000 2.49deg,#f50000 3.11deg,#ef0000 3.73deg,#ea0000 4.35deg,#e50000 4.97deg,#e00000 5.6deg,#da0000 6.22deg,#d50000 6.84deg,#d00000 7.46deg,#cc0000 8.08deg,#c70000 8.7deg,#c20000 9.33deg,#bd0000 9.95deg,#b90000 10.57deg,#b40000 11.19deg,#b00000 11.81deg,#ab0000 12.43deg,#a70000 13.06deg,#a20000 13.68deg,#9e0000 14.3deg,#9a0000 14.92deg,#960000 15.54deg,#910000 16.16deg,#8d0000 16.79deg,#890000 17.41deg,#850000 18.03deg,#810000 18.65deg,#7d0000 19.27deg,#790000 19.9deg,#750000 20.52deg,#710000 21.14deg,#6d0000 21.76deg,#690000 22.38deg,#650000 23deg,#610000 23.63deg,#5d0000 24.25deg,#590000 24.87deg,#550000 25.49deg,#510000 26.11deg,#4d0000 26.73deg,#490000 27.36deg,#450000 27.98deg,#410000 28.6deg,#3d0000 29.22deg,#390000 29.84deg,#350000 30.46deg,#310000 31.09deg,#2d0000 31.71deg,#290000 32.33deg,#240000 32.95deg,#200000 33.57deg,#1b0000 34.19deg,#170000 34.82deg,#120000 35.44deg,#0c0000 36.06deg,#060000 36.68deg,#000000 37.3deg,#000000 37.92deg,#000000 38.55deg,#000000 39.17deg)"></div><div class="cp" style="clip-path:polygon(1341.66px 342.97px,1504.74px 180.61px,1235.78px 156.66px,1228.88px 228.32px);background:#ff0000"></div></div><div class="cl"><div class="cp" style="clip-path:polygon(1341.66px 342.97px,1504.74px 180.61px,1235.78px 156.66px,1228.88px 228.32px);background:conic-gradient(from 3.41deg at 1206.17px 476.71px,#00ff00 0deg,#00ff00 0.69deg,#00ff00 1.39deg,#00fd00 2.08deg,#00f200 2.78deg,#00e700 3.47deg,#00dd00 4.17deg,#00d300 4.86deg,#00ca00 5.56deg,#00c200 6.25deg,#00ba00 6.95deg,#00b300 7.64deg,#00ac00 8.34deg,#00a500 9.03deg,#009f00 9.73deg,#009900 10.42deg,#009300 11.12deg,#008d00 11.81deg,#008800 12.51deg,#008300 13.2deg,#007e00 13.9deg,#007900 14.59deg,#007500 15.29deg,#007100 15.98deg,#006c00 16.68deg,#006800 17.37deg,#006400 18.07deg,#006100 18.76deg,#005d00 19.46deg,#005900 20.15deg,#005600 20.85deg,#005300 21.54deg,#004f00 22.24deg,#004c00 22.93deg,#004900 23.63deg,#004600 24.32deg,#004300 25.02deg,#004000 25.71deg,#003d00 26.41deg,#003a00 27.1deg,#003700 27.8deg,#003400 28.49deg,#003200 29.18deg,#002f00 29.88deg,#002c00 30.57deg,#002a00 31.27deg,#002700 31.96deg,#002500 32.66deg,#002200 33.35deg,#002000 34.05deg,#001d00 34.74deg,#001a00 35.44deg,#001800 36.13deg,#001500 36.83deg,#001300 37.52deg,#001000 38.22deg,#000d00 38.91deg,#000b00 39.61deg,#000800 40.3deg,#000500 41deg,#000100 41.69deg,#000000 42.39deg,#000000 43.08deg,#000000 43.78deg)"></div><div class="cp" style="clip-path:polygon(1166.63px 238.53px,1206.02px 477.5px,1342.35px 342.33px,1229.62px 227.52px);background:conic-gradient(from -136.82deg at 1503.97px 180.81px,#000000 0deg,#000000 0.62deg,#000000 1.24deg,#000000 1.86deg,#000400 2.48deg,#000700 3.09deg,#000a00 3.71deg,#000d00 4.33deg,#001000 4.95deg,#001300 5.57deg,#001600 6.19deg,#001800 6.81deg,#001b00 7.43deg,#001e00 8.05deg,#002000 8.66deg,#002300 9.28deg,#002600 9.9deg,#002900 10.52deg,#002b00 11.14deg,#002e00 11.76deg,#003100 12.38deg,#003400 13deg,#003700 13.62deg,#003a00 14.23deg,#003c00 14.85deg,#003f00 15.47deg,#004300 16.09deg,#004600 16.71deg,#004900 17.33deg,#004c00 17.95deg,#004f00 18.57deg,#005300 19.19deg,#005600 19.81deg,#005a00 20.42deg,#005d00 21.04deg,#006100 21.66deg,#006500 22.28deg,#006900 22.9deg,#006d00 23.52deg,#007100 24.14deg,#007600 24.76deg,#007a00 25.38deg,#007f00 25.99deg,#008400 26.61deg,#008900 27.23deg,#008e00 27.85deg,#009300 28.47deg,#009900 29.09deg,#009f00 29.71deg,#00a500 30.33deg,#00ab00 30.95deg,#00b200 31.56deg,#00b900 32.18deg,#00c000 32.8deg,#00c800 33.42deg,#00d000 34.04deg,#00d900 34.66deg,#00e200 35.28deg,#00ec00 35.9deg,#00f600 36.52deg,#00ff00 37.13deg,#00ff00 37.75deg,#00ff00 38.37deg,#00ff00 38.99deg)"></div><div class="cp" style="clip-path:polygon(1237px 156.61px,1151.88px 149.16px,1166.71px 239.82px,1230.23px 228.89px);background:#00ff00"></div></div><div class="cl"><div class="cp" style="clip-path:polygon(1341.66px 342.97px,1504.74px 180.61px,1235.78px 156.66px,1228.88px 228.32px);background:conic-gradient(from 93.05deg at 1152.45px 149.72px,#000000 0deg,#000000 0.71deg,#000000 1.41deg,#000002 2.12deg,#000008 2.82deg,#00000d 3.53deg,#000012 4.23deg,#000016 4.94deg,#00001b 5.64deg,#00001f 6.35deg,#000023 7.06deg,#000027 7.76deg,#00002b 8.47deg,#00002f 9.17deg,#000032 9.88deg,#000036 10.58deg,#00003a 11.29deg,#00003e 11.99deg,#000041 12.7deg,#000045 13.4deg,#000049 14.11deg,#00004c 14.82deg,#000050 15.52deg,#000054 16.23deg,#000057 16.93deg,#00005b 17.64deg,#00005f 18.34deg,#000063 19.05deg,#000066 19.75deg,#00006a 20.46deg,#00006e 21.17deg,#000072 21.87deg,#000076 22.58deg,#00007a 23.28deg,#00007e 23.99deg,#000082 24.69deg,#000086 25.4deg,#00008a 26.1deg,#00008e 26.81deg,#000092 27.52deg,#000096 28.22deg,#00009b 28.93deg,#00009f 29.63deg,#0000a3 30.34deg,#0000a8 31.04deg,#0000ad 31.75deg,#0000b1 32.45deg,#0000b6 33.16deg,#0000bb 33.86deg,#0000c0 34.57deg,#0000c5 35.28deg,#0000ca 35.98deg,#0000cf 36.69deg,#0000d5 37.39deg,#0000da 38.1deg,#0000e0 38.8deg,#0000e5 39.51deg,#0000eb 40.21deg,#0000f1 40.92deg,#0000f8 41.63deg,#0000fe 42.33deg,#0000ff 43.04deg,#0000ff 43.74deg,#0000ff 44.45deg)"></div><div class="cp" style="clip-path:polygon(1237px 156.61px,1151.88px 149.16px,1166.71px 239.82px,1230.23px 228.89px);background:conic-gradient(from -101.83deg at 1503.97px 180.81px,#0000ff 0deg,#0000ff 0.3deg,#0000ff 0.6deg,#0000ff 0.9deg,#0000ff 1.2deg,#0000ff 1.5deg,#0000ff 1.8deg,#0000fd 2.1deg,#0000f8 2.4deg,#0000f2 2.7deg,#0000ed 3deg,#0000e8 3.3deg,#0000e2 3.6deg,#0000dd 3.9deg,#0000d8 4.2deg,#0000d3 4.5deg,#0000cd 4.79deg,#0000c8 5.09deg,#0000c3 5.39deg,#0000be 5.69deg,#0000b9 5.99deg,#0000b4 6.29deg,#0000af 6.59deg,#0000aa 6.89deg,#0000a5 7.19deg,#0000a1 7.49deg,#00009c 7.79deg,#000097 8.09deg,#000092 8.39deg,#00008d 8.69deg,#000089 8.99deg,#000084 9.29deg,#00007f 9.59deg,#00007a 9.89deg,#000076 10.19deg,#000071 10.49deg,#00006c 10.79deg,#000067 11.09deg,#000063 11.39deg,#00005e 11.69deg,#000059 11.99deg,#000055 12.29deg,#000050 12.59deg,#00004b 12.89deg,#000046 13.19deg,#000041 13.49deg,#00003c 13.79deg,#000038 14.08deg,#000033 14.38deg,#00002d 14.68deg,#000028 14.98deg,#000023 15.28deg,#00001d 15.58deg,#000018 15.88deg,#000012 16.18deg,#00000b 16.48deg,#000004 16.78deg,#000000 17.08deg,#000000 17.38deg,#000000 17.68deg,#000000 17.98deg,#000000 18.28deg,#000000 18.58deg,#000000 18.88deg)"></div><div class="cp" style="clip-path:polygon(1166.63px 238.53px,1206.02px 477.5px,1342.35px 342.33px,1229.62px 227.52px);background:#0000ff"></div></div></div></div>
<svg width="1670" height="1006" viewBox="0 0 1670 1006" style="position:absolute;left:0;top:0">
<rect x="1019.7" y="119.9" width="639.8" height="491.2" fill="none" stroke="#8a8a8a" stroke-width="1.4"/>
<line x1="1014" y1="611.1" x2="1019.7" y2="611.1" stroke="#dcdcdc" stroke-width="1.3" />
<text x="1013.9" y="616.3" font-size="13.5" fill="#e4e4e4" text-anchor="end" textLength="8.56" lengthAdjust="spacingAndGlyphs">0</text>
<line x1="1019.7" y1="611.1" x2="1019.7" y2="617.9" stroke="#dcdcdc" stroke-width="1.3" />
<text x="1019.7" y="633.2" font-size="13.5" fill="#e4e4e4" text-anchor="middle" textLength="8.56" lengthAdjust="spacingAndGlyphs">0</text>
<line x1="1014" y1="570.17" x2="1019.7" y2="570.17" stroke="#dcdcdc" stroke-width="1.3" />
<text x="1013.9" y="575.37" font-size="13.5" fill="#e4e4e4" text-anchor="end" textLength="29.95" lengthAdjust="spacingAndGlyphs">0,05</text>
<line x1="1073.02" y1="611.1" x2="1073.02" y2="617.9" stroke="#dcdcdc" stroke-width="1.3" />
<text x="1073.02" y="633.2" font-size="13.5" fill="#e4e4e4" text-anchor="middle" textLength="29.95" lengthAdjust="spacingAndGlyphs">0,05</text>
<line x1="1014" y1="529.23" x2="1019.7" y2="529.23" stroke="#dcdcdc" stroke-width="1.3" />
<text x="1013.9" y="534.43" font-size="13.5" fill="#e4e4e4" text-anchor="end" textLength="21.39" lengthAdjust="spacingAndGlyphs">0,1</text>
<line x1="1126.33" y1="611.1" x2="1126.33" y2="617.9" stroke="#dcdcdc" stroke-width="1.3" />
<text x="1126.33" y="633.2" font-size="13.5" fill="#e4e4e4" text-anchor="middle" textLength="21.39" lengthAdjust="spacingAndGlyphs">0,1</text>
<line x1="1014" y1="488.3" x2="1019.7" y2="488.3" stroke="#dcdcdc" stroke-width="1.3" />
<text x="1013.9" y="493.5" font-size="13.5" fill="#e4e4e4" text-anchor="end" textLength="29.95" lengthAdjust="spacingAndGlyphs">0,15</text>
<line x1="1179.65" y1="611.1" x2="1179.65" y2="617.9" stroke="#dcdcdc" stroke-width="1.3" />
<text x="1179.65" y="633.2" font-size="13.5" fill="#e4e4e4" text-anchor="middle" textLength="29.95" lengthAdjust="spacingAndGlyphs">0,15</text>
<line x1="1014" y1="447.37" x2="1019.7" y2="447.37" stroke="#dcdcdc" stroke-width="1.3" />
<text x="1013.9" y="452.57" font-size="13.5" fill="#e4e4e4" text-anchor="end" textLength="21.39" lengthAdjust="spacingAndGlyphs">0,2</text>
<line x1="1232.97" y1="611.1" x2="1232.97" y2="617.9" stroke="#dcdcdc" stroke-width="1.3" />
<text x="1232.97" y="633.2" font-size="13.5" fill="#e4e4e4" text-anchor="middle" textLength="21.39" lengthAdjust="spacingAndGlyphs">0,2</text>
<line x1="1014" y1="406.43" x2="1019.7" y2="406.43" stroke="#dcdcdc" stroke-width="1.3" />
<text x="1013.9" y="411.63" font-size="13.5" fill="#e4e4e4" text-anchor="end" textLength="29.95" lengthAdjust="spacingAndGlyphs">0,25</text>
<line x1="1286.28" y1="611.1" x2="1286.28" y2="617.9" stroke="#dcdcdc" stroke-width="1.3" />
<text x="1286.28" y="633.2" font-size="13.5" fill="#e4e4e4" text-anchor="middle" textLength="29.95" lengthAdjust="spacingAndGlyphs">0,25</text>
<line x1="1014" y1="365.5" x2="1019.7" y2="365.5" stroke="#dcdcdc" stroke-width="1.3" />
<text x="1013.9" y="370.7" font-size="13.5" fill="#e4e4e4" text-anchor="end" textLength="21.39" lengthAdjust="spacingAndGlyphs">0,3</text>
<line x1="1339.6" y1="611.1" x2="1339.6" y2="617.9" stroke="#dcdcdc" stroke-width="1.3" />
<text x="1339.6" y="633.2" font-size="13.5" fill="#e4e4e4" text-anchor="middle" textLength="21.39" lengthAdjust="spacingAndGlyphs">0,3</text>
<line x1="1014" y1="324.57" x2="1019.7" y2="324.57" stroke="#dcdcdc" stroke-width="1.3" />
<text x="1013.9" y="329.77" font-size="13.5" fill="#e4e4e4" text-anchor="end" textLength="29.95" lengthAdjust="spacingAndGlyphs">0,35</text>
<line x1="1392.92" y1="611.1" x2="1392.92" y2="617.9" stroke="#dcdcdc" stroke-width="1.3" />
<text x="1392.92" y="633.2" font-size="13.5" fill="#e4e4e4" text-anchor="middle" textLength="29.95" lengthAdjust="spacingAndGlyphs">0,35</text>
<line x1="1014" y1="283.63" x2="1019.7" y2="283.63" stroke="#dcdcdc" stroke-width="1.3" />
<text x="1013.9" y="288.83" font-size="13.5" fill="#e4e4e4" text-anchor="end" textLength="21.39" lengthAdjust="spacingAndGlyphs">0,4</text>
<line x1="1446.23" y1="611.1" x2="1446.23" y2="617.9" stroke="#dcdcdc" stroke-width="1.3" />
<text x="1446.23" y="633.2" font-size="13.5" fill="#e4e4e4" text-anchor="middle" textLength="21.39" lengthAdjust="spacingAndGlyphs">0,4</text>
<line x1="1014" y1="242.7" x2="1019.7" y2="242.7" stroke="#dcdcdc" stroke-width="1.3" />
<text x="1013.9" y="247.9" font-size="13.5" fill="#e4e4e4" text-anchor="end" textLength="29.95" lengthAdjust="spacingAndGlyphs">0,45</text>
<line x1="1499.55" y1="611.1" x2="1499.55" y2="617.9" stroke="#dcdcdc" stroke-width="1.3" />
<text x="1499.55" y="633.2" font-size="13.5" fill="#e4e4e4" text-anchor="middle" textLength="29.95" lengthAdjust="spacingAndGlyphs">0,45</text>
<line x1="1014" y1="201.77" x2="1019.7" y2="201.77" stroke="#dcdcdc" stroke-width="1.3" />
<text x="1013.9" y="206.97" font-size="13.5" fill="#e4e4e4" text-anchor="end" textLength="21.39" lengthAdjust="spacingAndGlyphs">0,5</text>
<line x1="1552.87" y1="611.1" x2="1552.87" y2="617.9" stroke="#dcdcdc" stroke-width="1.3" />
<text x="1552.87" y="633.2" font-size="13.5" fill="#e4e4e4" text-anchor="middle" textLength="21.39" lengthAdjust="spacingAndGlyphs">0,5</text>
<line x1="1014" y1="160.83" x2="1019.7" y2="160.83" stroke="#dcdcdc" stroke-width="1.3" />
<text x="1013.9" y="166.03" font-size="13.5" fill="#e4e4e4" text-anchor="end" textLength="29.95" lengthAdjust="spacingAndGlyphs">0,55</text>
<line x1="1606.18" y1="611.1" x2="1606.18" y2="617.9" stroke="#dcdcdc" stroke-width="1.3" />
<text x="1606.18" y="633.2" font-size="13.5" fill="#e4e4e4" text-anchor="middle" textLength="29.95" lengthAdjust="spacingAndGlyphs">0,55</text>
<rect x="1404.3" y="580" width="251.7" height="26.5" fill="#333333" fill-opacity="0.85"/>
<text x="1405" y="600.8" font-size="18" fill="#f2f2f2" textLength="220.7" lengthAdjust="spacingAndGlyphs" xml:space="preserve">Gamut Coverage:  99,7%</text>
<rect x="1145.69" y="142.9" width="13.4" height="13.4" fill="none" stroke="#ececec" stroke-width="1.5"/>
<rect x="1229.84" y="150.75" width="13.4" height="13.4" fill="none" stroke="#ececec" stroke-width="1.5"/>
<rect x="1159.89" y="230.53" width="13.4" height="13.4" fill="none" stroke="#ececec" stroke-width="1.5"/>
<rect x="1337.63" y="333.44" width="13.4" height="13.4" fill="none" stroke="#ececec" stroke-width="1.5"/>
<rect x="1493" y="175.33" width="13.4" height="13.4" fill="none" stroke="#ececec" stroke-width="1.5"/>
<rect x="1199.48" y="474.14" width="13.4" height="13.4" fill="none" stroke="#ececec" stroke-width="1.5"/>
<circle cx="1151.85" cy="148.72" r="4.5" fill="#00a000" stroke="#101010" stroke-width="1.25"/>
<circle cx="1235.9" cy="156.92" r="4.5" fill="#b0b000" stroke="#101010" stroke-width="1.25"/>
<circle cx="1166.31" cy="238.41" r="4.5" fill="#00b0b0" stroke="#101010" stroke-width="1.25"/>
<circle cx="1340.95" cy="341.49" r="4.5" fill="#b000b0" stroke="#101010" stroke-width="1.25"/>
<circle cx="1503.37" cy="179.81" r="4.5" fill="#c00000" stroke="#101010" stroke-width="1.25"/>
<circle cx="1205.57" cy="475.71" r="4.5" fill="#0000c0" stroke="#101010" stroke-width="1.25"/>
<rect x="1223.45" y="220.1" width="13.2" height="13.2" fill="none" stroke="#ffffff" stroke-width="3.4"/>
<rect x="1223.45" y="220.1" width="13.2" height="13.2" fill="none" stroke="#000" stroke-width="2"/>
<circle cx="1229.75" cy="227.1" r="4.5" fill="#fff" stroke="#000" stroke-width="1.4"/>
</svg>
</body></html>
